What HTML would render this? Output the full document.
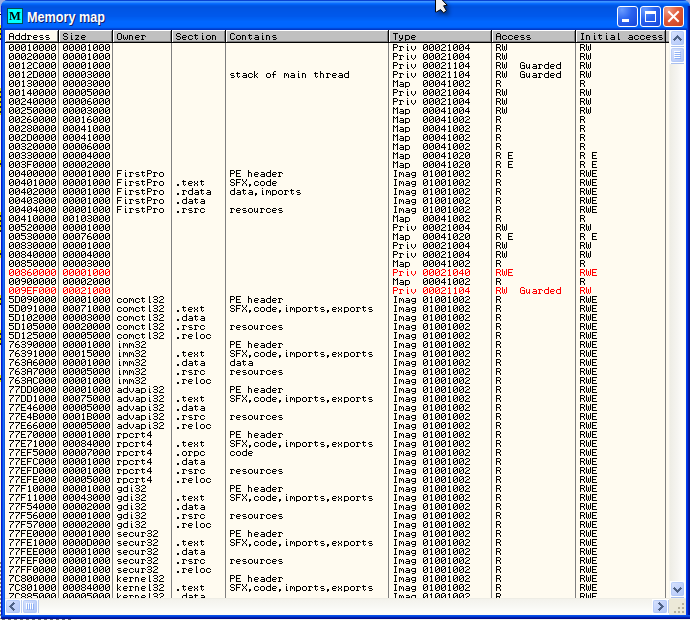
<!DOCTYPE html><html><head><meta charset="utf-8"><style>
html,body{margin:0;padding:0;}
body{width:690px;height:620px;position:relative;overflow:hidden;}
div,svg{position:absolute;box-sizing:content-box;}
.t{font:10px/9px "Liberation Mono",monospace;white-space:pre;height:9px;}
</style></head><body><div style="left:0px;top:0px;width:690px;height:620px;background:#9cade2;"></div><div style="left:0px;top:12px;width:1px;height:608px;background:#faf7ec;"></div><div style="left:0px;top:14px;width:1px;height:1px;background:#000;"></div><div style="left:0px;top:25px;width:1px;height:15px;background:repeating-linear-gradient(#f0ec00 0 3px,#222 3px 5px);"></div><div style="left:0px;top:88px;width:1px;height:27px;background:repeating-linear-gradient(#f0ec00 0 3px,#222 3px 5px);"></div><div style="left:0px;top:160px;width:1px;height:7px;background:repeating-linear-gradient(#f0ec00 0 3px,#222 3px 5px);"></div><div style="left:0px;top:212px;width:1px;height:20px;background:repeating-linear-gradient(#f0ec00 0 3px,#222 3px 5px);"></div><div style="left:0px;top:250px;width:1px;height:8px;background:repeating-linear-gradient(#f0ec00 0 3px,#222 3px 5px);"></div><div style="left:0px;top:295px;width:1px;height:10px;background:repeating-linear-gradient(#f0ec00 0 3px,#222 3px 5px);"></div><div style="left:0px;top:330px;width:1px;height:15px;background:repeating-linear-gradient(#f0ec00 0 3px,#222 3px 5px);"></div><div style="left:0px;top:375px;width:1px;height:7px;background:repeating-linear-gradient(#f0ec00 0 3px,#222 3px 5px);"></div><div style="left:0px;top:560px;width:1px;height:59px;background:repeating-linear-gradient(#faf7ec 0 2px,#8a8670 2px 4px);"></div><div style="left:0px;top:619px;width:690px;height:1px;background:#f6f4ee;"></div><div style="left:2px;top:619px;width:70px;height:1px;background:repeating-linear-gradient(90deg,#6a6a6a 0 3px,#f6f4ee 3px 6px);"></div><div style="left:1px;top:0px;width:689px;height:619px;background:#0855dd;border-radius:7px 7px 0 0;"></div><div style="left:1px;top:0px;width:689px;height:30px;background:linear-gradient(#0842d4 0px 1px,#3d95ff 1px 2px,#2a85ff 2px 3px,#0a6cff 3px 4px,#0062f5 4px 5px,#0058e8 5px 6px,#0054e2 6px 7px,#0053e0 7px 8px,#0054e3 8px 9px,#0055e5 9px 10px,#0056e6 10px 11px,#0056e7 11px 12px,#0057e8 12px 13px,#0057e9 13px 14px,#0058ea 14px 15px,#0058eb 15px 16px,#0059ec 16px 17px,#005df0 17px 18px,#005ff2 18px 19px,#0061f5 19px 20px,#0064fa 20px 21px,#0066ff 21px 22px,#0066ff 22px 23px,#0066ff 23px 24px,#0066ff 24px 25px,#0066ff 25px 26px,#0065fd 26px 27px,#0060f8 27px 28px,#0048d8 28px 29px,#0038c8 29px 30px);border-radius:7px 7px 0 0;"></div><div style="left:1px;top:30px;width:4px;height:589px;background:linear-gradient(90deg,#0019cf 0 1px,#0842e6 1px 2px,#1b6ff5 2px 3px,#0b55e2 3px 4px);"></div><div style="left:1px;top:6px;width:2px;height:24px;background:linear-gradient(90deg,#0028d8 0 1px,#0848ea 1px 2px);"></div><div style="left:686px;top:30px;width:4px;height:589px;background:linear-gradient(90deg,#0040ee 0 1px,#0030e0 1px 2px,#0018a8 2px 3px,#00138a 3px 4px);"></div><div style="left:687px;top:6px;width:3px;height:24px;background:linear-gradient(90deg,#0040e0 0 1px,#0020b0 1px 2px,#001590 2px 3px);"></div><div style="left:1px;top:615px;width:689px;height:4px;background:linear-gradient(#0a50e8 0 1px,#0040d8 1px 2px,#0020b0 2px 3px,#000e90 3px 4px);"></div><div style="left:7px;top:8px;width:14px;height:14px;background:#00ffff;border:1px solid #005050;"></div><div style="left:7px;top:7px;width:16px;height:16px;font:bold 12.5px/19px 'Liberation Serif',serif;color:#000;text-align:center;will-change:transform;">M</div><div style="left:27px;top:8px;height:18px;font:bold 13.6px/18px 'Liberation Sans',sans-serif;color:#fff;text-shadow:1px 1px 0 #0a1a6a;white-space:nowrap;transform:scale(0.93,1.1);transform-origin:0 0;">Memory map</div><div style="left:617px;top:6px;width:19px;height:19px;border:1px solid #fff;border-radius:3px;background:radial-gradient(circle at 20% 15%,#6a9cff 0,#2b64f0 45%,#1544d8 100%);"><div style="left:4px;top:12px;width:7px;height:3px;background:#fff"></div></div><div style="left:640px;top:6px;width:19px;height:19px;border:1px solid #fff;border-radius:3px;background:radial-gradient(circle at 20% 15%,#6a9cff 0,#2b64f0 45%,#1544d8 100%);"><div style="left:4px;top:4px;width:9px;height:7px;border:1px solid #fff;border-top-width:3px;"></div></div><div style="left:663px;top:6px;width:19px;height:19px;border:1px solid #fff;border-radius:3px;background:radial-gradient(circle at 20% 15%,#f0a08a 0,#e05a38 45%,#c8401f 100%);"><svg style="position:absolute;left:0;top:0" width="19" height="19"><path d="M5 5 L14 14 M14 5 L5 14" stroke="#fff" stroke-width="2" stroke-linecap="square"/></svg></div><div style="left:5px;top:30px;width:664px;height:568px;background:#fffbf0;"></div><div style="left:5px;top:30px;width:54px;height:13px;background:#fffbf0;"></div><div style="left:5px;top:30px;width:53px;height:1px;background:#fff;"></div><div style="left:5px;top:30px;width:1px;height:12px;background:#fff;"></div><div style="left:57px;top:31px;width:1px;height:11px;background:#808080;"></div><div style="left:6px;top:41px;width:52px;height:1px;background:#808080;"></div><div style="left:58px;top:30px;width:1px;height:13px;background:#000;"></div><div style="left:5px;top:42px;width:54px;height:1px;background:#000;"></div><div style="left:59px;top:30px;width:54px;height:13px;background:#c0c0c0;"></div><div style="left:59px;top:30px;width:53px;height:1px;background:#fff;"></div><div style="left:59px;top:30px;width:1px;height:12px;background:#fff;"></div><div style="left:111px;top:31px;width:1px;height:11px;background:#808080;"></div><div style="left:60px;top:41px;width:52px;height:1px;background:#808080;"></div><div style="left:112px;top:30px;width:1px;height:13px;background:#000;"></div><div style="left:59px;top:42px;width:54px;height:1px;background:#000;"></div><div style="left:113px;top:30px;width:59px;height:13px;background:#c0c0c0;"></div><div style="left:113px;top:30px;width:58px;height:1px;background:#fff;"></div><div style="left:113px;top:30px;width:1px;height:12px;background:#fff;"></div><div style="left:170px;top:31px;width:1px;height:11px;background:#808080;"></div><div style="left:114px;top:41px;width:57px;height:1px;background:#808080;"></div><div style="left:171px;top:30px;width:1px;height:13px;background:#000;"></div><div style="left:113px;top:42px;width:59px;height:1px;background:#000;"></div><div style="left:172px;top:30px;width:54px;height:13px;background:#c0c0c0;"></div><div style="left:172px;top:30px;width:53px;height:1px;background:#fff;"></div><div style="left:172px;top:30px;width:1px;height:12px;background:#fff;"></div><div style="left:224px;top:31px;width:1px;height:11px;background:#808080;"></div><div style="left:173px;top:41px;width:52px;height:1px;background:#808080;"></div><div style="left:225px;top:30px;width:1px;height:13px;background:#000;"></div><div style="left:172px;top:42px;width:54px;height:1px;background:#000;"></div><div style="left:226px;top:30px;width:163px;height:13px;background:#c0c0c0;"></div><div style="left:226px;top:30px;width:162px;height:1px;background:#fff;"></div><div style="left:226px;top:30px;width:1px;height:12px;background:#fff;"></div><div style="left:387px;top:31px;width:1px;height:11px;background:#808080;"></div><div style="left:227px;top:41px;width:161px;height:1px;background:#808080;"></div><div style="left:388px;top:30px;width:1px;height:13px;background:#000;"></div><div style="left:226px;top:42px;width:163px;height:1px;background:#000;"></div><div style="left:389px;top:30px;width:103px;height:13px;background:#c0c0c0;"></div><div style="left:389px;top:30px;width:102px;height:1px;background:#fff;"></div><div style="left:389px;top:30px;width:1px;height:12px;background:#fff;"></div><div style="left:490px;top:31px;width:1px;height:11px;background:#808080;"></div><div style="left:390px;top:41px;width:101px;height:1px;background:#808080;"></div><div style="left:491px;top:30px;width:1px;height:13px;background:#000;"></div><div style="left:389px;top:42px;width:103px;height:1px;background:#000;"></div><div style="left:492px;top:30px;width:84px;height:13px;background:#c0c0c0;"></div><div style="left:492px;top:30px;width:83px;height:1px;background:#fff;"></div><div style="left:492px;top:30px;width:1px;height:12px;background:#fff;"></div><div style="left:574px;top:31px;width:1px;height:11px;background:#808080;"></div><div style="left:493px;top:41px;width:82px;height:1px;background:#808080;"></div><div style="left:575px;top:30px;width:1px;height:13px;background:#000;"></div><div style="left:492px;top:42px;width:84px;height:1px;background:#000;"></div><div style="left:576px;top:30px;width:90px;height:13px;background:#c0c0c0;"></div><div style="left:576px;top:30px;width:89px;height:1px;background:#fff;"></div><div style="left:576px;top:30px;width:1px;height:12px;background:#fff;"></div><div style="left:664px;top:31px;width:1px;height:11px;background:#808080;"></div><div style="left:577px;top:41px;width:88px;height:1px;background:#808080;"></div><div style="left:665px;top:30px;width:1px;height:13px;background:#000;"></div><div style="left:576px;top:42px;width:90px;height:1px;background:#000;"></div><div style="left:666px;top:30px;width:3px;height:13px;background:#c0c0c0;"></div><div style="left:666px;top:30px;width:3px;height:1px;background:#fff;"></div><div style="left:666px;top:42px;width:3px;height:1px;background:#000;"></div><div style="left:666px;top:41px;width:3px;height:1px;background:#808080;"></div><div style="left:58px;top:43px;width:1px;height:555px;background:#808080;"></div><div style="left:112px;top:43px;width:1px;height:555px;background:#808080;"></div><div style="left:171px;top:43px;width:1px;height:555px;background:#808080;"></div><div style="left:225px;top:43px;width:1px;height:555px;background:#808080;"></div><div style="left:388px;top:43px;width:1px;height:555px;background:#808080;"></div><div style="left:491px;top:43px;width:1px;height:555px;background:#808080;"></div><div style="left:575px;top:43px;width:1px;height:555px;background:#808080;"></div><div style="left:665px;top:43px;width:1px;height:555px;background:#808080;"></div><svg style="left:0;top:0" width="690" height="620" shape-rendering="crispEdges"><defs><path id="g48" d="M1 0h3v1h-3zM0 1h1v1h-1zM4 1h1v1h-1zM0 2h1v1h-1zM3 2h2v1h-2zM0 3h1v1h-1zM2 3h1v1h-1zM4 3h1v1h-1zM0 4h2v1h-2zM4 4h1v1h-1zM0 5h1v1h-1zM4 5h1v1h-1zM1 6h3v1h-3z"/><path id="g49" d="M2 0h1v1h-1zM1 1h2v1h-2zM2 2h1v1h-1zM2 3h1v1h-1zM2 4h1v1h-1zM2 5h1v1h-1zM1 6h3v1h-3z"/><path id="g50" d="M1 0h3v1h-3zM0 1h1v1h-1zM4 1h1v1h-1zM4 2h1v1h-1zM2 3h2v1h-2zM1 4h1v1h-1zM0 5h1v1h-1zM0 6h5v1h-5z"/><path id="g51" d="M1 0h3v1h-3zM0 1h1v1h-1zM4 1h1v1h-1zM4 2h1v1h-1zM1 3h3v1h-3zM4 4h1v1h-1zM0 5h1v1h-1zM4 5h1v1h-1zM1 6h3v1h-3z"/><path id="g52" d="M3 0h1v1h-1zM2 1h2v1h-2zM1 2h1v1h-1zM3 2h1v1h-1zM0 3h1v1h-1zM3 3h1v1h-1zM0 4h5v1h-5zM3 5h1v1h-1zM3 6h1v1h-1z"/><path id="g53" d="M0 0h5v1h-5zM0 1h1v1h-1zM0 2h4v1h-4zM4 3h1v1h-1zM4 4h1v1h-1zM0 5h1v1h-1zM4 5h1v1h-1zM1 6h3v1h-3z"/><path id="g54" d="M2 0h2v1h-2zM1 1h1v1h-1zM0 2h1v1h-1zM0 3h4v1h-4zM0 4h1v1h-1zM4 4h1v1h-1zM0 5h1v1h-1zM4 5h1v1h-1zM1 6h3v1h-3z"/><path id="g55" d="M0 0h5v1h-5zM4 1h1v1h-1zM3 2h1v1h-1zM2 3h1v1h-1zM1 4h1v1h-1zM1 5h1v1h-1zM1 6h1v1h-1z"/><path id="g56" d="M1 0h3v1h-3zM0 1h1v1h-1zM4 1h1v1h-1zM0 2h1v1h-1zM4 2h1v1h-1zM1 3h3v1h-3zM0 4h1v1h-1zM4 4h1v1h-1zM0 5h1v1h-1zM4 5h1v1h-1zM1 6h3v1h-3z"/><path id="g57" d="M1 0h3v1h-3zM0 1h1v1h-1zM4 1h1v1h-1zM0 2h1v1h-1zM4 2h1v1h-1zM1 3h4v1h-4zM4 4h1v1h-1zM3 5h1v1h-1zM1 6h2v1h-2z"/><path id="g65" d="M1 0h3v1h-3zM0 1h1v1h-1zM4 1h1v1h-1zM0 2h1v1h-1zM4 2h1v1h-1zM0 3h5v1h-5zM0 4h1v1h-1zM4 4h1v1h-1zM0 5h1v1h-1zM4 5h1v1h-1zM0 6h1v1h-1zM4 6h1v1h-1z"/><path id="g66" d="M0 0h4v1h-4zM0 1h1v1h-1zM4 1h1v1h-1zM0 2h1v1h-1zM4 2h1v1h-1zM0 3h4v1h-4zM0 4h1v1h-1zM4 4h1v1h-1zM0 5h1v1h-1zM4 5h1v1h-1zM0 6h4v1h-4z"/><path id="g67" d="M1 0h3v1h-3zM0 1h1v1h-1zM4 1h1v1h-1zM0 2h1v1h-1zM0 3h1v1h-1zM0 4h1v1h-1zM0 5h1v1h-1zM4 5h1v1h-1zM1 6h3v1h-3z"/><path id="g68" d="M0 0h4v1h-4zM0 1h1v1h-1zM4 1h1v1h-1zM0 2h1v1h-1zM4 2h1v1h-1zM0 3h1v1h-1zM4 3h1v1h-1zM0 4h1v1h-1zM4 4h1v1h-1zM0 5h1v1h-1zM4 5h1v1h-1zM0 6h4v1h-4z"/><path id="g69" d="M0 0h5v1h-5zM0 1h1v1h-1zM0 2h1v1h-1zM0 3h4v1h-4zM0 4h1v1h-1zM0 5h1v1h-1zM0 6h5v1h-5z"/><path id="g70" d="M0 0h5v1h-5zM0 1h1v1h-1zM0 2h1v1h-1zM0 3h4v1h-4zM0 4h1v1h-1zM0 5h1v1h-1zM0 6h1v1h-1z"/><path id="g71" d="M1 0h3v1h-3zM0 1h1v1h-1zM4 1h1v1h-1zM0 2h1v1h-1zM0 3h1v1h-1zM2 3h3v1h-3zM0 4h1v1h-1zM4 4h1v1h-1zM0 5h1v1h-1zM4 5h1v1h-1zM1 6h4v1h-4z"/><path id="g73" d="M1 0h3v1h-3zM2 1h1v1h-1zM2 2h1v1h-1zM2 3h1v1h-1zM2 4h1v1h-1zM2 5h1v1h-1zM1 6h3v1h-3z"/><path id="g77" d="M0 0h1v1h-1zM4 0h1v1h-1zM0 1h2v1h-2zM3 1h2v1h-2zM0 2h1v1h-1zM2 2h1v1h-1zM4 2h1v1h-1zM0 3h1v1h-1zM4 3h1v1h-1zM0 4h1v1h-1zM4 4h1v1h-1zM0 5h1v1h-1zM4 5h1v1h-1zM0 6h1v1h-1zM4 6h1v1h-1z"/><path id="g79" d="M1 0h3v1h-3zM0 1h1v1h-1zM4 1h1v1h-1zM0 2h1v1h-1zM4 2h1v1h-1zM0 3h1v1h-1zM4 3h1v1h-1zM0 4h1v1h-1zM4 4h1v1h-1zM0 5h1v1h-1zM4 5h1v1h-1zM1 6h3v1h-3z"/><path id="g80" d="M0 0h4v1h-4zM0 1h1v1h-1zM4 1h1v1h-1zM0 2h1v1h-1zM4 2h1v1h-1zM0 3h4v1h-4zM0 4h1v1h-1zM0 5h1v1h-1zM0 6h1v1h-1z"/><path id="g82" d="M0 0h4v1h-4zM0 1h1v1h-1zM4 1h1v1h-1zM0 2h1v1h-1zM4 2h1v1h-1zM0 3h4v1h-4zM0 4h1v1h-1zM3 4h1v1h-1zM0 5h1v1h-1zM4 5h1v1h-1zM0 6h1v1h-1zM4 6h1v1h-1z"/><path id="g83" d="M1 0h3v1h-3zM0 1h1v1h-1zM4 1h1v1h-1zM0 2h1v1h-1zM1 3h3v1h-3zM4 4h1v1h-1zM0 5h1v1h-1zM4 5h1v1h-1zM1 6h3v1h-3z"/><path id="g84" d="M0 0h5v1h-5zM2 1h1v1h-1zM2 2h1v1h-1zM2 3h1v1h-1zM2 4h1v1h-1zM2 5h1v1h-1zM2 6h1v1h-1z"/><path id="g87" d="M0 0h1v1h-1zM4 0h1v1h-1zM0 1h1v1h-1zM4 1h1v1h-1zM0 2h1v1h-1zM2 2h1v1h-1zM4 2h1v1h-1zM0 3h1v1h-1zM2 3h1v1h-1zM4 3h1v1h-1zM0 4h1v1h-1zM2 4h1v1h-1zM4 4h1v1h-1zM0 5h1v1h-1zM2 5h1v1h-1zM4 5h1v1h-1zM1 6h1v1h-1zM3 6h1v1h-1z"/><path id="g88" d="M0 0h1v1h-1zM4 0h1v1h-1zM0 1h1v1h-1zM4 1h1v1h-1zM1 2h1v1h-1zM3 2h1v1h-1zM2 3h1v1h-1zM1 4h1v1h-1zM3 4h1v1h-1zM0 5h1v1h-1zM4 5h1v1h-1zM0 6h1v1h-1zM4 6h1v1h-1z"/><path id="g97" d="M1 2h3v1h-3zM4 3h1v1h-1zM1 4h4v1h-4zM0 5h1v1h-1zM4 5h1v1h-1zM1 6h4v1h-4z"/><path id="g99" d="M1 2h3v1h-3zM0 3h1v1h-1zM4 3h1v1h-1zM0 4h1v1h-1zM0 5h1v1h-1zM4 5h1v1h-1zM1 6h3v1h-3z"/><path id="g100" d="M4 0h1v1h-1zM4 1h1v1h-1zM1 2h4v1h-4zM0 3h1v1h-1zM4 3h1v1h-1zM0 4h1v1h-1zM4 4h1v1h-1zM0 5h1v1h-1zM4 5h1v1h-1zM1 6h4v1h-4z"/><path id="g101" d="M1 2h3v1h-3zM0 3h1v1h-1zM4 3h1v1h-1zM0 4h4v1h-4zM0 5h1v1h-1zM1 6h3v1h-3z"/><path id="g102" d="M2 0h2v1h-2zM1 1h1v1h-1zM1 2h1v1h-1zM0 3h4v1h-4zM1 4h1v1h-1zM1 5h1v1h-1zM1 6h1v1h-1z"/><path id="g103" d="M1 2h4v1h-4zM0 3h1v1h-1zM4 3h1v1h-1zM0 4h1v1h-1zM4 4h1v1h-1zM1 5h4v1h-4zM4 6h1v1h-1zM1 7h3v1h-3z"/><path id="g104" d="M0 0h1v1h-1zM0 1h1v1h-1zM0 2h3v1h-3zM0 3h1v1h-1zM3 3h1v1h-1zM0 4h1v1h-1zM3 4h1v1h-1zM0 5h1v1h-1zM3 5h1v1h-1zM0 6h1v1h-1zM3 6h1v1h-1z"/><path id="g105" d="M2 0h1v1h-1zM2 2h1v1h-1zM2 3h1v1h-1zM2 4h1v1h-1zM2 5h1v1h-1zM2 6h2v1h-2z"/><path id="g107" d="M0 0h1v1h-1zM0 1h1v1h-1zM0 2h1v1h-1zM3 2h1v1h-1zM0 3h1v1h-1zM2 3h1v1h-1zM0 4h2v1h-2zM0 5h1v1h-1zM2 5h1v1h-1zM0 6h1v1h-1zM3 6h1v1h-1z"/><path id="g108" d="M2 0h1v1h-1zM2 1h1v1h-1zM2 2h1v1h-1zM2 3h1v1h-1zM2 4h1v1h-1zM2 5h1v1h-1zM2 6h2v1h-2z"/><path id="g109" d="M0 2h2v1h-2zM3 2h1v1h-1zM0 3h1v1h-1zM2 3h1v1h-1zM4 3h1v1h-1zM0 4h1v1h-1zM2 4h1v1h-1zM4 4h1v1h-1zM0 5h1v1h-1zM4 5h1v1h-1zM0 6h1v1h-1zM4 6h1v1h-1z"/><path id="g110" d="M0 2h3v1h-3zM0 3h1v1h-1zM3 3h1v1h-1zM0 4h1v1h-1zM3 4h1v1h-1zM0 5h1v1h-1zM3 5h1v1h-1zM0 6h1v1h-1zM3 6h1v1h-1z"/><path id="g111" d="M1 2h3v1h-3zM0 3h1v1h-1zM4 3h1v1h-1zM0 4h1v1h-1zM4 4h1v1h-1zM0 5h1v1h-1zM4 5h1v1h-1zM1 6h3v1h-3z"/><path id="g112" d="M0 2h4v1h-4zM0 3h1v1h-1zM4 3h1v1h-1zM0 4h1v1h-1zM4 4h1v1h-1zM0 5h1v1h-1zM4 5h1v1h-1zM0 6h4v1h-4zM0 7h1v1h-1z"/><path id="g114" d="M0 2h4v1h-4zM1 3h1v1h-1zM4 3h1v1h-1zM1 4h1v1h-1zM1 5h1v1h-1zM0 6h3v1h-3z"/><path id="g115" d="M1 2h3v1h-3zM0 3h1v1h-1zM1 4h3v1h-3zM4 5h1v1h-1zM1 6h3v1h-3z"/><path id="g116" d="M1 1h1v1h-1zM0 2h4v1h-4zM1 3h1v1h-1zM1 4h1v1h-1zM1 5h1v1h-1zM3 5h1v1h-1zM2 6h1v1h-1z"/><path id="g117" d="M0 2h1v1h-1zM3 2h1v1h-1zM0 3h1v1h-1zM3 3h1v1h-1zM0 4h1v1h-1zM3 4h1v1h-1zM0 5h1v1h-1zM2 5h2v1h-2zM1 6h1v1h-1zM3 6h1v1h-1z"/><path id="g118" d="M0 2h1v1h-1zM4 2h1v1h-1zM0 3h1v1h-1zM4 3h1v1h-1zM0 4h1v1h-1zM4 4h1v1h-1zM1 5h1v1h-1zM3 5h1v1h-1zM2 6h1v1h-1z"/><path id="g119" d="M0 2h1v1h-1zM4 2h1v1h-1zM0 3h1v1h-1zM4 3h1v1h-1zM0 4h1v1h-1zM2 4h1v1h-1zM4 4h1v1h-1zM0 5h1v1h-1zM2 5h1v1h-1zM4 5h1v1h-1zM1 6h1v1h-1zM3 6h1v1h-1z"/><path id="g120" d="M0 2h1v1h-1zM3 2h1v1h-1zM0 3h1v1h-1zM3 3h1v1h-1zM1 4h2v1h-2zM0 5h1v1h-1zM3 5h1v1h-1zM0 6h1v1h-1zM3 6h1v1h-1z"/><path id="g121" d="M0 2h1v1h-1zM3 2h1v1h-1zM0 3h1v1h-1zM3 3h1v1h-1zM0 4h1v1h-1zM3 4h1v1h-1zM1 5h3v1h-3zM2 6h1v1h-1zM0 7h2v1h-2z"/><path id="g122" d="M0 2h4v1h-4zM3 3h1v1h-1zM2 4h1v1h-1zM1 5h1v1h-1zM0 6h4v1h-4z"/><path id="g44" d="M1 5h2v1h-2zM1 6h2v1h-2zM1 7h1v1h-1z"/><path id="g46" d="M1 5h2v1h-2zM1 6h2v1h-2z"/><clipPath id="cb"><rect x="5" y="43" width="660" height="555"/></clipPath><clipPath id="ch"><rect x="5" y="30" width="660" height="12"/></clipPath></defs><g clip-path="url(#ch)" fill="#000"><use href="#g65" x="9" y="33"/><use href="#g100" x="15" y="33"/><use href="#g100" x="21" y="33"/><use href="#g114" x="27" y="33"/><use href="#g101" x="33" y="33"/><use href="#g115" x="39" y="33"/><use href="#g115" x="45" y="33"/><use href="#g83" x="63" y="33"/><use href="#g105" x="69" y="33"/><use href="#g122" x="75" y="33"/><use href="#g101" x="81" y="33"/><use href="#g79" x="117" y="33"/><use href="#g119" x="123" y="33"/><use href="#g110" x="129" y="33"/><use href="#g101" x="135" y="33"/><use href="#g114" x="141" y="33"/><use href="#g83" x="176" y="33"/><use href="#g101" x="182" y="33"/><use href="#g99" x="188" y="33"/><use href="#g116" x="194" y="33"/><use href="#g105" x="200" y="33"/><use href="#g111" x="206" y="33"/><use href="#g110" x="212" y="33"/><use href="#g67" x="230" y="33"/><use href="#g111" x="236" y="33"/><use href="#g110" x="242" y="33"/><use href="#g116" x="248" y="33"/><use href="#g97" x="254" y="33"/><use href="#g105" x="260" y="33"/><use href="#g110" x="266" y="33"/><use href="#g115" x="272" y="33"/><use href="#g84" x="393" y="33"/><use href="#g121" x="399" y="33"/><use href="#g112" x="405" y="33"/><use href="#g101" x="411" y="33"/><use href="#g65" x="496" y="33"/><use href="#g99" x="502" y="33"/><use href="#g99" x="508" y="33"/><use href="#g101" x="514" y="33"/><use href="#g115" x="520" y="33"/><use href="#g115" x="526" y="33"/><use href="#g73" x="580" y="33"/><use href="#g110" x="586" y="33"/><use href="#g105" x="592" y="33"/><use href="#g116" x="598" y="33"/><use href="#g105" x="604" y="33"/><use href="#g97" x="610" y="33"/><use href="#g108" x="616" y="33"/><use href="#g97" x="628" y="33"/><use href="#g99" x="634" y="33"/><use href="#g99" x="640" y="33"/><use href="#g101" x="646" y="33"/><use href="#g115" x="652" y="33"/><use href="#g115" x="658" y="33"/></g><g clip-path="url(#cb)" fill="#000"><use href="#g48" x="9" y="44"/><use href="#g48" x="15" y="44"/><use href="#g48" x="21" y="44"/><use href="#g49" x="27" y="44"/><use href="#g48" x="33" y="44"/><use href="#g48" x="39" y="44"/><use href="#g48" x="45" y="44"/><use href="#g48" x="51" y="44"/><use href="#g48" x="63" y="44"/><use href="#g48" x="69" y="44"/><use href="#g48" x="75" y="44"/><use href="#g48" x="81" y="44"/><use href="#g49" x="87" y="44"/><use href="#g48" x="93" y="44"/><use href="#g48" x="99" y="44"/><use href="#g48" x="105" y="44"/><use href="#g80" x="393" y="44"/><use href="#g114" x="399" y="44"/><use href="#g105" x="405" y="44"/><use href="#g118" x="411" y="44"/><use href="#g48" x="423" y="44"/><use href="#g48" x="429" y="44"/><use href="#g48" x="435" y="44"/><use href="#g50" x="441" y="44"/><use href="#g49" x="447" y="44"/><use href="#g48" x="453" y="44"/><use href="#g48" x="459" y="44"/><use href="#g52" x="465" y="44"/><use href="#g82" x="496" y="44"/><use href="#g87" x="502" y="44"/><use href="#g82" x="580" y="44"/><use href="#g87" x="586" y="44"/><use href="#g48" x="9" y="53"/><use href="#g48" x="15" y="53"/><use href="#g48" x="21" y="53"/><use href="#g50" x="27" y="53"/><use href="#g48" x="33" y="53"/><use href="#g48" x="39" y="53"/><use href="#g48" x="45" y="53"/><use href="#g48" x="51" y="53"/><use href="#g48" x="63" y="53"/><use href="#g48" x="69" y="53"/><use href="#g48" x="75" y="53"/><use href="#g48" x="81" y="53"/><use href="#g49" x="87" y="53"/><use href="#g48" x="93" y="53"/><use href="#g48" x="99" y="53"/><use href="#g48" x="105" y="53"/><use href="#g80" x="393" y="53"/><use href="#g114" x="399" y="53"/><use href="#g105" x="405" y="53"/><use href="#g118" x="411" y="53"/><use href="#g48" x="423" y="53"/><use href="#g48" x="429" y="53"/><use href="#g48" x="435" y="53"/><use href="#g50" x="441" y="53"/><use href="#g49" x="447" y="53"/><use href="#g48" x="453" y="53"/><use href="#g48" x="459" y="53"/><use href="#g52" x="465" y="53"/><use href="#g82" x="496" y="53"/><use href="#g87" x="502" y="53"/><use href="#g82" x="580" y="53"/><use href="#g87" x="586" y="53"/><use href="#g48" x="9" y="62"/><use href="#g48" x="15" y="62"/><use href="#g49" x="21" y="62"/><use href="#g50" x="27" y="62"/><use href="#g67" x="33" y="62"/><use href="#g48" x="39" y="62"/><use href="#g48" x="45" y="62"/><use href="#g48" x="51" y="62"/><use href="#g48" x="63" y="62"/><use href="#g48" x="69" y="62"/><use href="#g48" x="75" y="62"/><use href="#g48" x="81" y="62"/><use href="#g49" x="87" y="62"/><use href="#g48" x="93" y="62"/><use href="#g48" x="99" y="62"/><use href="#g48" x="105" y="62"/><use href="#g80" x="393" y="62"/><use href="#g114" x="399" y="62"/><use href="#g105" x="405" y="62"/><use href="#g118" x="411" y="62"/><use href="#g48" x="423" y="62"/><use href="#g48" x="429" y="62"/><use href="#g48" x="435" y="62"/><use href="#g50" x="441" y="62"/><use href="#g49" x="447" y="62"/><use href="#g49" x="453" y="62"/><use href="#g48" x="459" y="62"/><use href="#g52" x="465" y="62"/><use href="#g82" x="496" y="62"/><use href="#g87" x="502" y="62"/><use href="#g71" x="520" y="62"/><use href="#g117" x="526" y="62"/><use href="#g97" x="532" y="62"/><use href="#g114" x="538" y="62"/><use href="#g100" x="544" y="62"/><use href="#g101" x="550" y="62"/><use href="#g100" x="556" y="62"/><use href="#g82" x="580" y="62"/><use href="#g87" x="586" y="62"/><use href="#g48" x="9" y="71"/><use href="#g48" x="15" y="71"/><use href="#g49" x="21" y="71"/><use href="#g50" x="27" y="71"/><use href="#g68" x="33" y="71"/><use href="#g48" x="39" y="71"/><use href="#g48" x="45" y="71"/><use href="#g48" x="51" y="71"/><use href="#g48" x="63" y="71"/><use href="#g48" x="69" y="71"/><use href="#g48" x="75" y="71"/><use href="#g48" x="81" y="71"/><use href="#g51" x="87" y="71"/><use href="#g48" x="93" y="71"/><use href="#g48" x="99" y="71"/><use href="#g48" x="105" y="71"/><use href="#g115" x="230" y="71"/><use href="#g116" x="236" y="71"/><use href="#g97" x="242" y="71"/><use href="#g99" x="248" y="71"/><use href="#g107" x="254" y="71"/><use href="#g111" x="266" y="71"/><use href="#g102" x="272" y="71"/><use href="#g109" x="284" y="71"/><use href="#g97" x="290" y="71"/><use href="#g105" x="296" y="71"/><use href="#g110" x="302" y="71"/><use href="#g116" x="314" y="71"/><use href="#g104" x="320" y="71"/><use href="#g114" x="326" y="71"/><use href="#g101" x="332" y="71"/><use href="#g97" x="338" y="71"/><use href="#g100" x="344" y="71"/><use href="#g80" x="393" y="71"/><use href="#g114" x="399" y="71"/><use href="#g105" x="405" y="71"/><use href="#g118" x="411" y="71"/><use href="#g48" x="423" y="71"/><use href="#g48" x="429" y="71"/><use href="#g48" x="435" y="71"/><use href="#g50" x="441" y="71"/><use href="#g49" x="447" y="71"/><use href="#g49" x="453" y="71"/><use href="#g48" x="459" y="71"/><use href="#g52" x="465" y="71"/><use href="#g82" x="496" y="71"/><use href="#g87" x="502" y="71"/><use href="#g71" x="520" y="71"/><use href="#g117" x="526" y="71"/><use href="#g97" x="532" y="71"/><use href="#g114" x="538" y="71"/><use href="#g100" x="544" y="71"/><use href="#g101" x="550" y="71"/><use href="#g100" x="556" y="71"/><use href="#g82" x="580" y="71"/><use href="#g87" x="586" y="71"/><use href="#g48" x="9" y="80"/><use href="#g48" x="15" y="80"/><use href="#g49" x="21" y="80"/><use href="#g51" x="27" y="80"/><use href="#g48" x="33" y="80"/><use href="#g48" x="39" y="80"/><use href="#g48" x="45" y="80"/><use href="#g48" x="51" y="80"/><use href="#g48" x="63" y="80"/><use href="#g48" x="69" y="80"/><use href="#g48" x="75" y="80"/><use href="#g48" x="81" y="80"/><use href="#g51" x="87" y="80"/><use href="#g48" x="93" y="80"/><use href="#g48" x="99" y="80"/><use href="#g48" x="105" y="80"/><use href="#g77" x="393" y="80"/><use href="#g97" x="399" y="80"/><use href="#g112" x="405" y="80"/><use href="#g48" x="423" y="80"/><use href="#g48" x="429" y="80"/><use href="#g48" x="435" y="80"/><use href="#g52" x="441" y="80"/><use href="#g49" x="447" y="80"/><use href="#g48" x="453" y="80"/><use href="#g48" x="459" y="80"/><use href="#g50" x="465" y="80"/><use href="#g82" x="496" y="80"/><use href="#g82" x="580" y="80"/><use href="#g48" x="9" y="89"/><use href="#g48" x="15" y="89"/><use href="#g49" x="21" y="89"/><use href="#g52" x="27" y="89"/><use href="#g48" x="33" y="89"/><use href="#g48" x="39" y="89"/><use href="#g48" x="45" y="89"/><use href="#g48" x="51" y="89"/><use href="#g48" x="63" y="89"/><use href="#g48" x="69" y="89"/><use href="#g48" x="75" y="89"/><use href="#g48" x="81" y="89"/><use href="#g53" x="87" y="89"/><use href="#g48" x="93" y="89"/><use href="#g48" x="99" y="89"/><use href="#g48" x="105" y="89"/><use href="#g80" x="393" y="89"/><use href="#g114" x="399" y="89"/><use href="#g105" x="405" y="89"/><use href="#g118" x="411" y="89"/><use href="#g48" x="423" y="89"/><use href="#g48" x="429" y="89"/><use href="#g48" x="435" y="89"/><use href="#g50" x="441" y="89"/><use href="#g49" x="447" y="89"/><use href="#g48" x="453" y="89"/><use href="#g48" x="459" y="89"/><use href="#g52" x="465" y="89"/><use href="#g82" x="496" y="89"/><use href="#g87" x="502" y="89"/><use href="#g82" x="580" y="89"/><use href="#g87" x="586" y="89"/><use href="#g48" x="9" y="98"/><use href="#g48" x="15" y="98"/><use href="#g50" x="21" y="98"/><use href="#g52" x="27" y="98"/><use href="#g48" x="33" y="98"/><use href="#g48" x="39" y="98"/><use href="#g48" x="45" y="98"/><use href="#g48" x="51" y="98"/><use href="#g48" x="63" y="98"/><use href="#g48" x="69" y="98"/><use href="#g48" x="75" y="98"/><use href="#g48" x="81" y="98"/><use href="#g54" x="87" y="98"/><use href="#g48" x="93" y="98"/><use href="#g48" x="99" y="98"/><use href="#g48" x="105" y="98"/><use href="#g80" x="393" y="98"/><use href="#g114" x="399" y="98"/><use href="#g105" x="405" y="98"/><use href="#g118" x="411" y="98"/><use href="#g48" x="423" y="98"/><use href="#g48" x="429" y="98"/><use href="#g48" x="435" y="98"/><use href="#g50" x="441" y="98"/><use href="#g49" x="447" y="98"/><use href="#g48" x="453" y="98"/><use href="#g48" x="459" y="98"/><use href="#g52" x="465" y="98"/><use href="#g82" x="496" y="98"/><use href="#g87" x="502" y="98"/><use href="#g82" x="580" y="98"/><use href="#g87" x="586" y="98"/><use href="#g48" x="9" y="107"/><use href="#g48" x="15" y="107"/><use href="#g50" x="21" y="107"/><use href="#g53" x="27" y="107"/><use href="#g48" x="33" y="107"/><use href="#g48" x="39" y="107"/><use href="#g48" x="45" y="107"/><use href="#g48" x="51" y="107"/><use href="#g48" x="63" y="107"/><use href="#g48" x="69" y="107"/><use href="#g48" x="75" y="107"/><use href="#g48" x="81" y="107"/><use href="#g51" x="87" y="107"/><use href="#g48" x="93" y="107"/><use href="#g48" x="99" y="107"/><use href="#g48" x="105" y="107"/><use href="#g77" x="393" y="107"/><use href="#g97" x="399" y="107"/><use href="#g112" x="405" y="107"/><use href="#g48" x="423" y="107"/><use href="#g48" x="429" y="107"/><use href="#g48" x="435" y="107"/><use href="#g52" x="441" y="107"/><use href="#g49" x="447" y="107"/><use href="#g48" x="453" y="107"/><use href="#g48" x="459" y="107"/><use href="#g52" x="465" y="107"/><use href="#g82" x="496" y="107"/><use href="#g87" x="502" y="107"/><use href="#g82" x="580" y="107"/><use href="#g87" x="586" y="107"/><use href="#g48" x="9" y="116"/><use href="#g48" x="15" y="116"/><use href="#g50" x="21" y="116"/><use href="#g54" x="27" y="116"/><use href="#g48" x="33" y="116"/><use href="#g48" x="39" y="116"/><use href="#g48" x="45" y="116"/><use href="#g48" x="51" y="116"/><use href="#g48" x="63" y="116"/><use href="#g48" x="69" y="116"/><use href="#g48" x="75" y="116"/><use href="#g49" x="81" y="116"/><use href="#g54" x="87" y="116"/><use href="#g48" x="93" y="116"/><use href="#g48" x="99" y="116"/><use href="#g48" x="105" y="116"/><use href="#g77" x="393" y="116"/><use href="#g97" x="399" y="116"/><use href="#g112" x="405" y="116"/><use href="#g48" x="423" y="116"/><use href="#g48" x="429" y="116"/><use href="#g48" x="435" y="116"/><use href="#g52" x="441" y="116"/><use href="#g49" x="447" y="116"/><use href="#g48" x="453" y="116"/><use href="#g48" x="459" y="116"/><use href="#g50" x="465" y="116"/><use href="#g82" x="496" y="116"/><use href="#g82" x="580" y="116"/><use href="#g48" x="9" y="125"/><use href="#g48" x="15" y="125"/><use href="#g50" x="21" y="125"/><use href="#g56" x="27" y="125"/><use href="#g48" x="33" y="125"/><use href="#g48" x="39" y="125"/><use href="#g48" x="45" y="125"/><use href="#g48" x="51" y="125"/><use href="#g48" x="63" y="125"/><use href="#g48" x="69" y="125"/><use href="#g48" x="75" y="125"/><use href="#g52" x="81" y="125"/><use href="#g49" x="87" y="125"/><use href="#g48" x="93" y="125"/><use href="#g48" x="99" y="125"/><use href="#g48" x="105" y="125"/><use href="#g77" x="393" y="125"/><use href="#g97" x="399" y="125"/><use href="#g112" x="405" y="125"/><use href="#g48" x="423" y="125"/><use href="#g48" x="429" y="125"/><use href="#g48" x="435" y="125"/><use href="#g52" x="441" y="125"/><use href="#g49" x="447" y="125"/><use href="#g48" x="453" y="125"/><use href="#g48" x="459" y="125"/><use href="#g50" x="465" y="125"/><use href="#g82" x="496" y="125"/><use href="#g82" x="580" y="125"/><use href="#g48" x="9" y="134"/><use href="#g48" x="15" y="134"/><use href="#g50" x="21" y="134"/><use href="#g68" x="27" y="134"/><use href="#g48" x="33" y="134"/><use href="#g48" x="39" y="134"/><use href="#g48" x="45" y="134"/><use href="#g48" x="51" y="134"/><use href="#g48" x="63" y="134"/><use href="#g48" x="69" y="134"/><use href="#g48" x="75" y="134"/><use href="#g52" x="81" y="134"/><use href="#g49" x="87" y="134"/><use href="#g48" x="93" y="134"/><use href="#g48" x="99" y="134"/><use href="#g48" x="105" y="134"/><use href="#g77" x="393" y="134"/><use href="#g97" x="399" y="134"/><use href="#g112" x="405" y="134"/><use href="#g48" x="423" y="134"/><use href="#g48" x="429" y="134"/><use href="#g48" x="435" y="134"/><use href="#g52" x="441" y="134"/><use href="#g49" x="447" y="134"/><use href="#g48" x="453" y="134"/><use href="#g48" x="459" y="134"/><use href="#g50" x="465" y="134"/><use href="#g82" x="496" y="134"/><use href="#g82" x="580" y="134"/><use href="#g48" x="9" y="143"/><use href="#g48" x="15" y="143"/><use href="#g51" x="21" y="143"/><use href="#g50" x="27" y="143"/><use href="#g48" x="33" y="143"/><use href="#g48" x="39" y="143"/><use href="#g48" x="45" y="143"/><use href="#g48" x="51" y="143"/><use href="#g48" x="63" y="143"/><use href="#g48" x="69" y="143"/><use href="#g48" x="75" y="143"/><use href="#g48" x="81" y="143"/><use href="#g54" x="87" y="143"/><use href="#g48" x="93" y="143"/><use href="#g48" x="99" y="143"/><use href="#g48" x="105" y="143"/><use href="#g77" x="393" y="143"/><use href="#g97" x="399" y="143"/><use href="#g112" x="405" y="143"/><use href="#g48" x="423" y="143"/><use href="#g48" x="429" y="143"/><use href="#g48" x="435" y="143"/><use href="#g52" x="441" y="143"/><use href="#g49" x="447" y="143"/><use href="#g48" x="453" y="143"/><use href="#g48" x="459" y="143"/><use href="#g50" x="465" y="143"/><use href="#g82" x="496" y="143"/><use href="#g82" x="580" y="143"/><use href="#g48" x="9" y="152"/><use href="#g48" x="15" y="152"/><use href="#g51" x="21" y="152"/><use href="#g51" x="27" y="152"/><use href="#g48" x="33" y="152"/><use href="#g48" x="39" y="152"/><use href="#g48" x="45" y="152"/><use href="#g48" x="51" y="152"/><use href="#g48" x="63" y="152"/><use href="#g48" x="69" y="152"/><use href="#g48" x="75" y="152"/><use href="#g48" x="81" y="152"/><use href="#g52" x="87" y="152"/><use href="#g48" x="93" y="152"/><use href="#g48" x="99" y="152"/><use href="#g48" x="105" y="152"/><use href="#g77" x="393" y="152"/><use href="#g97" x="399" y="152"/><use href="#g112" x="405" y="152"/><use href="#g48" x="423" y="152"/><use href="#g48" x="429" y="152"/><use href="#g48" x="435" y="152"/><use href="#g52" x="441" y="152"/><use href="#g49" x="447" y="152"/><use href="#g48" x="453" y="152"/><use href="#g50" x="459" y="152"/><use href="#g48" x="465" y="152"/><use href="#g82" x="496" y="152"/><use href="#g69" x="508" y="152"/><use href="#g82" x="580" y="152"/><use href="#g69" x="592" y="152"/><use href="#g48" x="9" y="161"/><use href="#g48" x="15" y="161"/><use href="#g51" x="21" y="161"/><use href="#g70" x="27" y="161"/><use href="#g48" x="33" y="161"/><use href="#g48" x="39" y="161"/><use href="#g48" x="45" y="161"/><use href="#g48" x="51" y="161"/><use href="#g48" x="63" y="161"/><use href="#g48" x="69" y="161"/><use href="#g48" x="75" y="161"/><use href="#g48" x="81" y="161"/><use href="#g50" x="87" y="161"/><use href="#g48" x="93" y="161"/><use href="#g48" x="99" y="161"/><use href="#g48" x="105" y="161"/><use href="#g77" x="393" y="161"/><use href="#g97" x="399" y="161"/><use href="#g112" x="405" y="161"/><use href="#g48" x="423" y="161"/><use href="#g48" x="429" y="161"/><use href="#g48" x="435" y="161"/><use href="#g52" x="441" y="161"/><use href="#g49" x="447" y="161"/><use href="#g48" x="453" y="161"/><use href="#g50" x="459" y="161"/><use href="#g48" x="465" y="161"/><use href="#g82" x="496" y="161"/><use href="#g69" x="508" y="161"/><use href="#g82" x="580" y="161"/><use href="#g69" x="592" y="161"/><use href="#g48" x="9" y="170"/><use href="#g48" x="15" y="170"/><use href="#g52" x="21" y="170"/><use href="#g48" x="27" y="170"/><use href="#g48" x="33" y="170"/><use href="#g48" x="39" y="170"/><use href="#g48" x="45" y="170"/><use href="#g48" x="51" y="170"/><use href="#g48" x="63" y="170"/><use href="#g48" x="69" y="170"/><use href="#g48" x="75" y="170"/><use href="#g48" x="81" y="170"/><use href="#g49" x="87" y="170"/><use href="#g48" x="93" y="170"/><use href="#g48" x="99" y="170"/><use href="#g48" x="105" y="170"/><use href="#g70" x="117" y="170"/><use href="#g105" x="123" y="170"/><use href="#g114" x="129" y="170"/><use href="#g115" x="135" y="170"/><use href="#g116" x="141" y="170"/><use href="#g80" x="147" y="170"/><use href="#g114" x="153" y="170"/><use href="#g111" x="159" y="170"/><use href="#g80" x="230" y="170"/><use href="#g69" x="236" y="170"/><use href="#g104" x="248" y="170"/><use href="#g101" x="254" y="170"/><use href="#g97" x="260" y="170"/><use href="#g100" x="266" y="170"/><use href="#g101" x="272" y="170"/><use href="#g114" x="278" y="170"/><use href="#g73" x="393" y="170"/><use href="#g109" x="399" y="170"/><use href="#g97" x="405" y="170"/><use href="#g103" x="411" y="170"/><use href="#g48" x="423" y="170"/><use href="#g49" x="429" y="170"/><use href="#g48" x="435" y="170"/><use href="#g48" x="441" y="170"/><use href="#g49" x="447" y="170"/><use href="#g48" x="453" y="170"/><use href="#g48" x="459" y="170"/><use href="#g50" x="465" y="170"/><use href="#g82" x="496" y="170"/><use href="#g82" x="580" y="170"/><use href="#g87" x="586" y="170"/><use href="#g69" x="592" y="170"/><use href="#g48" x="9" y="179"/><use href="#g48" x="15" y="179"/><use href="#g52" x="21" y="179"/><use href="#g48" x="27" y="179"/><use href="#g49" x="33" y="179"/><use href="#g48" x="39" y="179"/><use href="#g48" x="45" y="179"/><use href="#g48" x="51" y="179"/><use href="#g48" x="63" y="179"/><use href="#g48" x="69" y="179"/><use href="#g48" x="75" y="179"/><use href="#g48" x="81" y="179"/><use href="#g49" x="87" y="179"/><use href="#g48" x="93" y="179"/><use href="#g48" x="99" y="179"/><use href="#g48" x="105" y="179"/><use href="#g70" x="117" y="179"/><use href="#g105" x="123" y="179"/><use href="#g114" x="129" y="179"/><use href="#g115" x="135" y="179"/><use href="#g116" x="141" y="179"/><use href="#g80" x="147" y="179"/><use href="#g114" x="153" y="179"/><use href="#g111" x="159" y="179"/><use href="#g46" x="176" y="179"/><use href="#g116" x="182" y="179"/><use href="#g101" x="188" y="179"/><use href="#g120" x="194" y="179"/><use href="#g116" x="200" y="179"/><use href="#g83" x="230" y="179"/><use href="#g70" x="236" y="179"/><use href="#g88" x="242" y="179"/><use href="#g44" x="248" y="179"/><use href="#g99" x="254" y="179"/><use href="#g111" x="260" y="179"/><use href="#g100" x="266" y="179"/><use href="#g101" x="272" y="179"/><use href="#g73" x="393" y="179"/><use href="#g109" x="399" y="179"/><use href="#g97" x="405" y="179"/><use href="#g103" x="411" y="179"/><use href="#g48" x="423" y="179"/><use href="#g49" x="429" y="179"/><use href="#g48" x="435" y="179"/><use href="#g48" x="441" y="179"/><use href="#g49" x="447" y="179"/><use href="#g48" x="453" y="179"/><use href="#g48" x="459" y="179"/><use href="#g50" x="465" y="179"/><use href="#g82" x="496" y="179"/><use href="#g82" x="580" y="179"/><use href="#g87" x="586" y="179"/><use href="#g69" x="592" y="179"/><use href="#g48" x="9" y="188"/><use href="#g48" x="15" y="188"/><use href="#g52" x="21" y="188"/><use href="#g48" x="27" y="188"/><use href="#g50" x="33" y="188"/><use href="#g48" x="39" y="188"/><use href="#g48" x="45" y="188"/><use href="#g48" x="51" y="188"/><use href="#g48" x="63" y="188"/><use href="#g48" x="69" y="188"/><use href="#g48" x="75" y="188"/><use href="#g48" x="81" y="188"/><use href="#g49" x="87" y="188"/><use href="#g48" x="93" y="188"/><use href="#g48" x="99" y="188"/><use href="#g48" x="105" y="188"/><use href="#g70" x="117" y="188"/><use href="#g105" x="123" y="188"/><use href="#g114" x="129" y="188"/><use href="#g115" x="135" y="188"/><use href="#g116" x="141" y="188"/><use href="#g80" x="147" y="188"/><use href="#g114" x="153" y="188"/><use href="#g111" x="159" y="188"/><use href="#g46" x="176" y="188"/><use href="#g114" x="182" y="188"/><use href="#g100" x="188" y="188"/><use href="#g97" x="194" y="188"/><use href="#g116" x="200" y="188"/><use href="#g97" x="206" y="188"/><use href="#g100" x="230" y="188"/><use href="#g97" x="236" y="188"/><use href="#g116" x="242" y="188"/><use href="#g97" x="248" y="188"/><use href="#g44" x="254" y="188"/><use href="#g105" x="260" y="188"/><use href="#g109" x="266" y="188"/><use href="#g112" x="272" y="188"/><use href="#g111" x="278" y="188"/><use href="#g114" x="284" y="188"/><use href="#g116" x="290" y="188"/><use href="#g115" x="296" y="188"/><use href="#g73" x="393" y="188"/><use href="#g109" x="399" y="188"/><use href="#g97" x="405" y="188"/><use href="#g103" x="411" y="188"/><use href="#g48" x="423" y="188"/><use href="#g49" x="429" y="188"/><use href="#g48" x="435" y="188"/><use href="#g48" x="441" y="188"/><use href="#g49" x="447" y="188"/><use href="#g48" x="453" y="188"/><use href="#g48" x="459" y="188"/><use href="#g50" x="465" y="188"/><use href="#g82" x="496" y="188"/><use href="#g82" x="580" y="188"/><use href="#g87" x="586" y="188"/><use href="#g69" x="592" y="188"/><use href="#g48" x="9" y="197"/><use href="#g48" x="15" y="197"/><use href="#g52" x="21" y="197"/><use href="#g48" x="27" y="197"/><use href="#g51" x="33" y="197"/><use href="#g48" x="39" y="197"/><use href="#g48" x="45" y="197"/><use href="#g48" x="51" y="197"/><use href="#g48" x="63" y="197"/><use href="#g48" x="69" y="197"/><use href="#g48" x="75" y="197"/><use href="#g48" x="81" y="197"/><use href="#g49" x="87" y="197"/><use href="#g48" x="93" y="197"/><use href="#g48" x="99" y="197"/><use href="#g48" x="105" y="197"/><use href="#g70" x="117" y="197"/><use href="#g105" x="123" y="197"/><use href="#g114" x="129" y="197"/><use href="#g115" x="135" y="197"/><use href="#g116" x="141" y="197"/><use href="#g80" x="147" y="197"/><use href="#g114" x="153" y="197"/><use href="#g111" x="159" y="197"/><use href="#g46" x="176" y="197"/><use href="#g100" x="182" y="197"/><use href="#g97" x="188" y="197"/><use href="#g116" x="194" y="197"/><use href="#g97" x="200" y="197"/><use href="#g73" x="393" y="197"/><use href="#g109" x="399" y="197"/><use href="#g97" x="405" y="197"/><use href="#g103" x="411" y="197"/><use href="#g48" x="423" y="197"/><use href="#g49" x="429" y="197"/><use href="#g48" x="435" y="197"/><use href="#g48" x="441" y="197"/><use href="#g49" x="447" y="197"/><use href="#g48" x="453" y="197"/><use href="#g48" x="459" y="197"/><use href="#g50" x="465" y="197"/><use href="#g82" x="496" y="197"/><use href="#g82" x="580" y="197"/><use href="#g87" x="586" y="197"/><use href="#g69" x="592" y="197"/><use href="#g48" x="9" y="206"/><use href="#g48" x="15" y="206"/><use href="#g52" x="21" y="206"/><use href="#g48" x="27" y="206"/><use href="#g52" x="33" y="206"/><use href="#g48" x="39" y="206"/><use href="#g48" x="45" y="206"/><use href="#g48" x="51" y="206"/><use href="#g48" x="63" y="206"/><use href="#g48" x="69" y="206"/><use href="#g48" x="75" y="206"/><use href="#g48" x="81" y="206"/><use href="#g49" x="87" y="206"/><use href="#g48" x="93" y="206"/><use href="#g48" x="99" y="206"/><use href="#g48" x="105" y="206"/><use href="#g70" x="117" y="206"/><use href="#g105" x="123" y="206"/><use href="#g114" x="129" y="206"/><use href="#g115" x="135" y="206"/><use href="#g116" x="141" y="206"/><use href="#g80" x="147" y="206"/><use href="#g114" x="153" y="206"/><use href="#g111" x="159" y="206"/><use href="#g46" x="176" y="206"/><use href="#g114" x="182" y="206"/><use href="#g115" x="188" y="206"/><use href="#g114" x="194" y="206"/><use href="#g99" x="200" y="206"/><use href="#g114" x="230" y="206"/><use href="#g101" x="236" y="206"/><use href="#g115" x="242" y="206"/><use href="#g111" x="248" y="206"/><use href="#g117" x="254" y="206"/><use href="#g114" x="260" y="206"/><use href="#g99" x="266" y="206"/><use href="#g101" x="272" y="206"/><use href="#g115" x="278" y="206"/><use href="#g73" x="393" y="206"/><use href="#g109" x="399" y="206"/><use href="#g97" x="405" y="206"/><use href="#g103" x="411" y="206"/><use href="#g48" x="423" y="206"/><use href="#g49" x="429" y="206"/><use href="#g48" x="435" y="206"/><use href="#g48" x="441" y="206"/><use href="#g49" x="447" y="206"/><use href="#g48" x="453" y="206"/><use href="#g48" x="459" y="206"/><use href="#g50" x="465" y="206"/><use href="#g82" x="496" y="206"/><use href="#g82" x="580" y="206"/><use href="#g87" x="586" y="206"/><use href="#g69" x="592" y="206"/><use href="#g48" x="9" y="215"/><use href="#g48" x="15" y="215"/><use href="#g52" x="21" y="215"/><use href="#g49" x="27" y="215"/><use href="#g48" x="33" y="215"/><use href="#g48" x="39" y="215"/><use href="#g48" x="45" y="215"/><use href="#g48" x="51" y="215"/><use href="#g48" x="63" y="215"/><use href="#g48" x="69" y="215"/><use href="#g49" x="75" y="215"/><use href="#g48" x="81" y="215"/><use href="#g51" x="87" y="215"/><use href="#g48" x="93" y="215"/><use href="#g48" x="99" y="215"/><use href="#g48" x="105" y="215"/><use href="#g77" x="393" y="215"/><use href="#g97" x="399" y="215"/><use href="#g112" x="405" y="215"/><use href="#g48" x="423" y="215"/><use href="#g48" x="429" y="215"/><use href="#g48" x="435" y="215"/><use href="#g52" x="441" y="215"/><use href="#g49" x="447" y="215"/><use href="#g48" x="453" y="215"/><use href="#g48" x="459" y="215"/><use href="#g50" x="465" y="215"/><use href="#g82" x="496" y="215"/><use href="#g82" x="580" y="215"/><use href="#g48" x="9" y="224"/><use href="#g48" x="15" y="224"/><use href="#g53" x="21" y="224"/><use href="#g50" x="27" y="224"/><use href="#g48" x="33" y="224"/><use href="#g48" x="39" y="224"/><use href="#g48" x="45" y="224"/><use href="#g48" x="51" y="224"/><use href="#g48" x="63" y="224"/><use href="#g48" x="69" y="224"/><use href="#g48" x="75" y="224"/><use href="#g48" x="81" y="224"/><use href="#g49" x="87" y="224"/><use href="#g48" x="93" y="224"/><use href="#g48" x="99" y="224"/><use href="#g48" x="105" y="224"/><use href="#g80" x="393" y="224"/><use href="#g114" x="399" y="224"/><use href="#g105" x="405" y="224"/><use href="#g118" x="411" y="224"/><use href="#g48" x="423" y="224"/><use href="#g48" x="429" y="224"/><use href="#g48" x="435" y="224"/><use href="#g50" x="441" y="224"/><use href="#g49" x="447" y="224"/><use href="#g48" x="453" y="224"/><use href="#g48" x="459" y="224"/><use href="#g52" x="465" y="224"/><use href="#g82" x="496" y="224"/><use href="#g87" x="502" y="224"/><use href="#g82" x="580" y="224"/><use href="#g87" x="586" y="224"/><use href="#g48" x="9" y="233"/><use href="#g48" x="15" y="233"/><use href="#g53" x="21" y="233"/><use href="#g51" x="27" y="233"/><use href="#g48" x="33" y="233"/><use href="#g48" x="39" y="233"/><use href="#g48" x="45" y="233"/><use href="#g48" x="51" y="233"/><use href="#g48" x="63" y="233"/><use href="#g48" x="69" y="233"/><use href="#g48" x="75" y="233"/><use href="#g55" x="81" y="233"/><use href="#g54" x="87" y="233"/><use href="#g48" x="93" y="233"/><use href="#g48" x="99" y="233"/><use href="#g48" x="105" y="233"/><use href="#g77" x="393" y="233"/><use href="#g97" x="399" y="233"/><use href="#g112" x="405" y="233"/><use href="#g48" x="423" y="233"/><use href="#g48" x="429" y="233"/><use href="#g48" x="435" y="233"/><use href="#g52" x="441" y="233"/><use href="#g49" x="447" y="233"/><use href="#g48" x="453" y="233"/><use href="#g50" x="459" y="233"/><use href="#g48" x="465" y="233"/><use href="#g82" x="496" y="233"/><use href="#g69" x="508" y="233"/><use href="#g82" x="580" y="233"/><use href="#g69" x="592" y="233"/><use href="#g48" x="9" y="242"/><use href="#g48" x="15" y="242"/><use href="#g56" x="21" y="242"/><use href="#g51" x="27" y="242"/><use href="#g48" x="33" y="242"/><use href="#g48" x="39" y="242"/><use href="#g48" x="45" y="242"/><use href="#g48" x="51" y="242"/><use href="#g48" x="63" y="242"/><use href="#g48" x="69" y="242"/><use href="#g48" x="75" y="242"/><use href="#g48" x="81" y="242"/><use href="#g49" x="87" y="242"/><use href="#g48" x="93" y="242"/><use href="#g48" x="99" y="242"/><use href="#g48" x="105" y="242"/><use href="#g80" x="393" y="242"/><use href="#g114" x="399" y="242"/><use href="#g105" x="405" y="242"/><use href="#g118" x="411" y="242"/><use href="#g48" x="423" y="242"/><use href="#g48" x="429" y="242"/><use href="#g48" x="435" y="242"/><use href="#g50" x="441" y="242"/><use href="#g49" x="447" y="242"/><use href="#g48" x="453" y="242"/><use href="#g48" x="459" y="242"/><use href="#g52" x="465" y="242"/><use href="#g82" x="496" y="242"/><use href="#g87" x="502" y="242"/><use href="#g82" x="580" y="242"/><use href="#g87" x="586" y="242"/><use href="#g48" x="9" y="251"/><use href="#g48" x="15" y="251"/><use href="#g56" x="21" y="251"/><use href="#g52" x="27" y="251"/><use href="#g48" x="33" y="251"/><use href="#g48" x="39" y="251"/><use href="#g48" x="45" y="251"/><use href="#g48" x="51" y="251"/><use href="#g48" x="63" y="251"/><use href="#g48" x="69" y="251"/><use href="#g48" x="75" y="251"/><use href="#g48" x="81" y="251"/><use href="#g52" x="87" y="251"/><use href="#g48" x="93" y="251"/><use href="#g48" x="99" y="251"/><use href="#g48" x="105" y="251"/><use href="#g80" x="393" y="251"/><use href="#g114" x="399" y="251"/><use href="#g105" x="405" y="251"/><use href="#g118" x="411" y="251"/><use href="#g48" x="423" y="251"/><use href="#g48" x="429" y="251"/><use href="#g48" x="435" y="251"/><use href="#g50" x="441" y="251"/><use href="#g49" x="447" y="251"/><use href="#g48" x="453" y="251"/><use href="#g48" x="459" y="251"/><use href="#g52" x="465" y="251"/><use href="#g82" x="496" y="251"/><use href="#g87" x="502" y="251"/><use href="#g82" x="580" y="251"/><use href="#g87" x="586" y="251"/><use href="#g48" x="9" y="260"/><use href="#g48" x="15" y="260"/><use href="#g56" x="21" y="260"/><use href="#g53" x="27" y="260"/><use href="#g48" x="33" y="260"/><use href="#g48" x="39" y="260"/><use href="#g48" x="45" y="260"/><use href="#g48" x="51" y="260"/><use href="#g48" x="63" y="260"/><use href="#g48" x="69" y="260"/><use href="#g48" x="75" y="260"/><use href="#g48" x="81" y="260"/><use href="#g51" x="87" y="260"/><use href="#g48" x="93" y="260"/><use href="#g48" x="99" y="260"/><use href="#g48" x="105" y="260"/><use href="#g77" x="393" y="260"/><use href="#g97" x="399" y="260"/><use href="#g112" x="405" y="260"/><use href="#g48" x="423" y="260"/><use href="#g48" x="429" y="260"/><use href="#g48" x="435" y="260"/><use href="#g52" x="441" y="260"/><use href="#g49" x="447" y="260"/><use href="#g48" x="453" y="260"/><use href="#g48" x="459" y="260"/><use href="#g50" x="465" y="260"/><use href="#g82" x="496" y="260"/><use href="#g82" x="580" y="260"/><use href="#g48" x="9" y="278"/><use href="#g48" x="15" y="278"/><use href="#g57" x="21" y="278"/><use href="#g48" x="27" y="278"/><use href="#g48" x="33" y="278"/><use href="#g48" x="39" y="278"/><use href="#g48" x="45" y="278"/><use href="#g48" x="51" y="278"/><use href="#g48" x="63" y="278"/><use href="#g48" x="69" y="278"/><use href="#g48" x="75" y="278"/><use href="#g48" x="81" y="278"/><use href="#g50" x="87" y="278"/><use href="#g48" x="93" y="278"/><use href="#g48" x="99" y="278"/><use href="#g48" x="105" y="278"/><use href="#g77" x="393" y="278"/><use href="#g97" x="399" y="278"/><use href="#g112" x="405" y="278"/><use href="#g48" x="423" y="278"/><use href="#g48" x="429" y="278"/><use href="#g48" x="435" y="278"/><use href="#g52" x="441" y="278"/><use href="#g49" x="447" y="278"/><use href="#g48" x="453" y="278"/><use href="#g48" x="459" y="278"/><use href="#g50" x="465" y="278"/><use href="#g82" x="496" y="278"/><use href="#g82" x="580" y="278"/><use href="#g53" x="9" y="296"/><use href="#g68" x="15" y="296"/><use href="#g48" x="21" y="296"/><use href="#g57" x="27" y="296"/><use href="#g48" x="33" y="296"/><use href="#g48" x="39" y="296"/><use href="#g48" x="45" y="296"/><use href="#g48" x="51" y="296"/><use href="#g48" x="63" y="296"/><use href="#g48" x="69" y="296"/><use href="#g48" x="75" y="296"/><use href="#g48" x="81" y="296"/><use href="#g49" x="87" y="296"/><use href="#g48" x="93" y="296"/><use href="#g48" x="99" y="296"/><use href="#g48" x="105" y="296"/><use href="#g99" x="117" y="296"/><use href="#g111" x="123" y="296"/><use href="#g109" x="129" y="296"/><use href="#g99" x="135" y="296"/><use href="#g116" x="141" y="296"/><use href="#g108" x="147" y="296"/><use href="#g51" x="153" y="296"/><use href="#g50" x="159" y="296"/><use href="#g80" x="230" y="296"/><use href="#g69" x="236" y="296"/><use href="#g104" x="248" y="296"/><use href="#g101" x="254" y="296"/><use href="#g97" x="260" y="296"/><use href="#g100" x="266" y="296"/><use href="#g101" x="272" y="296"/><use href="#g114" x="278" y="296"/><use href="#g73" x="393" y="296"/><use href="#g109" x="399" y="296"/><use href="#g97" x="405" y="296"/><use href="#g103" x="411" y="296"/><use href="#g48" x="423" y="296"/><use href="#g49" x="429" y="296"/><use href="#g48" x="435" y="296"/><use href="#g48" x="441" y="296"/><use href="#g49" x="447" y="296"/><use href="#g48" x="453" y="296"/><use href="#g48" x="459" y="296"/><use href="#g50" x="465" y="296"/><use href="#g82" x="496" y="296"/><use href="#g82" x="580" y="296"/><use href="#g87" x="586" y="296"/><use href="#g69" x="592" y="296"/><use href="#g53" x="9" y="305"/><use href="#g68" x="15" y="305"/><use href="#g48" x="21" y="305"/><use href="#g57" x="27" y="305"/><use href="#g49" x="33" y="305"/><use href="#g48" x="39" y="305"/><use href="#g48" x="45" y="305"/><use href="#g48" x="51" y="305"/><use href="#g48" x="63" y="305"/><use href="#g48" x="69" y="305"/><use href="#g48" x="75" y="305"/><use href="#g55" x="81" y="305"/><use href="#g49" x="87" y="305"/><use href="#g48" x="93" y="305"/><use href="#g48" x="99" y="305"/><use href="#g48" x="105" y="305"/><use href="#g99" x="117" y="305"/><use href="#g111" x="123" y="305"/><use href="#g109" x="129" y="305"/><use href="#g99" x="135" y="305"/><use href="#g116" x="141" y="305"/><use href="#g108" x="147" y="305"/><use href="#g51" x="153" y="305"/><use href="#g50" x="159" y="305"/><use href="#g46" x="176" y="305"/><use href="#g116" x="182" y="305"/><use href="#g101" x="188" y="305"/><use href="#g120" x="194" y="305"/><use href="#g116" x="200" y="305"/><use href="#g83" x="230" y="305"/><use href="#g70" x="236" y="305"/><use href="#g88" x="242" y="305"/><use href="#g44" x="248" y="305"/><use href="#g99" x="254" y="305"/><use href="#g111" x="260" y="305"/><use href="#g100" x="266" y="305"/><use href="#g101" x="272" y="305"/><use href="#g44" x="278" y="305"/><use href="#g105" x="284" y="305"/><use href="#g109" x="290" y="305"/><use href="#g112" x="296" y="305"/><use href="#g111" x="302" y="305"/><use href="#g114" x="308" y="305"/><use href="#g116" x="314" y="305"/><use href="#g115" x="320" y="305"/><use href="#g44" x="326" y="305"/><use href="#g101" x="332" y="305"/><use href="#g120" x="338" y="305"/><use href="#g112" x="344" y="305"/><use href="#g111" x="350" y="305"/><use href="#g114" x="356" y="305"/><use href="#g116" x="362" y="305"/><use href="#g115" x="368" y="305"/><use href="#g73" x="393" y="305"/><use href="#g109" x="399" y="305"/><use href="#g97" x="405" y="305"/><use href="#g103" x="411" y="305"/><use href="#g48" x="423" y="305"/><use href="#g49" x="429" y="305"/><use href="#g48" x="435" y="305"/><use href="#g48" x="441" y="305"/><use href="#g49" x="447" y="305"/><use href="#g48" x="453" y="305"/><use href="#g48" x="459" y="305"/><use href="#g50" x="465" y="305"/><use href="#g82" x="496" y="305"/><use href="#g82" x="580" y="305"/><use href="#g87" x="586" y="305"/><use href="#g69" x="592" y="305"/><use href="#g53" x="9" y="314"/><use href="#g68" x="15" y="314"/><use href="#g49" x="21" y="314"/><use href="#g48" x="27" y="314"/><use href="#g50" x="33" y="314"/><use href="#g48" x="39" y="314"/><use href="#g48" x="45" y="314"/><use href="#g48" x="51" y="314"/><use href="#g48" x="63" y="314"/><use href="#g48" x="69" y="314"/><use href="#g48" x="75" y="314"/><use href="#g48" x="81" y="314"/><use href="#g51" x="87" y="314"/><use href="#g48" x="93" y="314"/><use href="#g48" x="99" y="314"/><use href="#g48" x="105" y="314"/><use href="#g99" x="117" y="314"/><use href="#g111" x="123" y="314"/><use href="#g109" x="129" y="314"/><use href="#g99" x="135" y="314"/><use href="#g116" x="141" y="314"/><use href="#g108" x="147" y="314"/><use href="#g51" x="153" y="314"/><use href="#g50" x="159" y="314"/><use href="#g46" x="176" y="314"/><use href="#g100" x="182" y="314"/><use href="#g97" x="188" y="314"/><use href="#g116" x="194" y="314"/><use href="#g97" x="200" y="314"/><use href="#g73" x="393" y="314"/><use href="#g109" x="399" y="314"/><use href="#g97" x="405" y="314"/><use href="#g103" x="411" y="314"/><use href="#g48" x="423" y="314"/><use href="#g49" x="429" y="314"/><use href="#g48" x="435" y="314"/><use href="#g48" x="441" y="314"/><use href="#g49" x="447" y="314"/><use href="#g48" x="453" y="314"/><use href="#g48" x="459" y="314"/><use href="#g50" x="465" y="314"/><use href="#g82" x="496" y="314"/><use href="#g82" x="580" y="314"/><use href="#g87" x="586" y="314"/><use href="#g69" x="592" y="314"/><use href="#g53" x="9" y="323"/><use href="#g68" x="15" y="323"/><use href="#g49" x="21" y="323"/><use href="#g48" x="27" y="323"/><use href="#g53" x="33" y="323"/><use href="#g48" x="39" y="323"/><use href="#g48" x="45" y="323"/><use href="#g48" x="51" y="323"/><use href="#g48" x="63" y="323"/><use href="#g48" x="69" y="323"/><use href="#g48" x="75" y="323"/><use href="#g50" x="81" y="323"/><use href="#g48" x="87" y="323"/><use href="#g48" x="93" y="323"/><use href="#g48" x="99" y="323"/><use href="#g48" x="105" y="323"/><use href="#g99" x="117" y="323"/><use href="#g111" x="123" y="323"/><use href="#g109" x="129" y="323"/><use href="#g99" x="135" y="323"/><use href="#g116" x="141" y="323"/><use href="#g108" x="147" y="323"/><use href="#g51" x="153" y="323"/><use href="#g50" x="159" y="323"/><use href="#g46" x="176" y="323"/><use href="#g114" x="182" y="323"/><use href="#g115" x="188" y="323"/><use href="#g114" x="194" y="323"/><use href="#g99" x="200" y="323"/><use href="#g114" x="230" y="323"/><use href="#g101" x="236" y="323"/><use href="#g115" x="242" y="323"/><use href="#g111" x="248" y="323"/><use href="#g117" x="254" y="323"/><use href="#g114" x="260" y="323"/><use href="#g99" x="266" y="323"/><use href="#g101" x="272" y="323"/><use href="#g115" x="278" y="323"/><use href="#g73" x="393" y="323"/><use href="#g109" x="399" y="323"/><use href="#g97" x="405" y="323"/><use href="#g103" x="411" y="323"/><use href="#g48" x="423" y="323"/><use href="#g49" x="429" y="323"/><use href="#g48" x="435" y="323"/><use href="#g48" x="441" y="323"/><use href="#g49" x="447" y="323"/><use href="#g48" x="453" y="323"/><use href="#g48" x="459" y="323"/><use href="#g50" x="465" y="323"/><use href="#g82" x="496" y="323"/><use href="#g82" x="580" y="323"/><use href="#g87" x="586" y="323"/><use href="#g69" x="592" y="323"/><use href="#g53" x="9" y="332"/><use href="#g68" x="15" y="332"/><use href="#g49" x="21" y="332"/><use href="#g50" x="27" y="332"/><use href="#g53" x="33" y="332"/><use href="#g48" x="39" y="332"/><use href="#g48" x="45" y="332"/><use href="#g48" x="51" y="332"/><use href="#g48" x="63" y="332"/><use href="#g48" x="69" y="332"/><use href="#g48" x="75" y="332"/><use href="#g48" x="81" y="332"/><use href="#g53" x="87" y="332"/><use href="#g48" x="93" y="332"/><use href="#g48" x="99" y="332"/><use href="#g48" x="105" y="332"/><use href="#g99" x="117" y="332"/><use href="#g111" x="123" y="332"/><use href="#g109" x="129" y="332"/><use href="#g99" x="135" y="332"/><use href="#g116" x="141" y="332"/><use href="#g108" x="147" y="332"/><use href="#g51" x="153" y="332"/><use href="#g50" x="159" y="332"/><use href="#g46" x="176" y="332"/><use href="#g114" x="182" y="332"/><use href="#g101" x="188" y="332"/><use href="#g108" x="194" y="332"/><use href="#g111" x="200" y="332"/><use href="#g99" x="206" y="332"/><use href="#g73" x="393" y="332"/><use href="#g109" x="399" y="332"/><use href="#g97" x="405" y="332"/><use href="#g103" x="411" y="332"/><use href="#g48" x="423" y="332"/><use href="#g49" x="429" y="332"/><use href="#g48" x="435" y="332"/><use href="#g48" x="441" y="332"/><use href="#g49" x="447" y="332"/><use href="#g48" x="453" y="332"/><use href="#g48" x="459" y="332"/><use href="#g50" x="465" y="332"/><use href="#g82" x="496" y="332"/><use href="#g82" x="580" y="332"/><use href="#g87" x="586" y="332"/><use href="#g69" x="592" y="332"/><use href="#g55" x="9" y="341"/><use href="#g54" x="15" y="341"/><use href="#g51" x="21" y="341"/><use href="#g57" x="27" y="341"/><use href="#g48" x="33" y="341"/><use href="#g48" x="39" y="341"/><use href="#g48" x="45" y="341"/><use href="#g48" x="51" y="341"/><use href="#g48" x="63" y="341"/><use href="#g48" x="69" y="341"/><use href="#g48" x="75" y="341"/><use href="#g48" x="81" y="341"/><use href="#g49" x="87" y="341"/><use href="#g48" x="93" y="341"/><use href="#g48" x="99" y="341"/><use href="#g48" x="105" y="341"/><use href="#g105" x="117" y="341"/><use href="#g109" x="123" y="341"/><use href="#g109" x="129" y="341"/><use href="#g51" x="135" y="341"/><use href="#g50" x="141" y="341"/><use href="#g80" x="230" y="341"/><use href="#g69" x="236" y="341"/><use href="#g104" x="248" y="341"/><use href="#g101" x="254" y="341"/><use href="#g97" x="260" y="341"/><use href="#g100" x="266" y="341"/><use href="#g101" x="272" y="341"/><use href="#g114" x="278" y="341"/><use href="#g73" x="393" y="341"/><use href="#g109" x="399" y="341"/><use href="#g97" x="405" y="341"/><use href="#g103" x="411" y="341"/><use href="#g48" x="423" y="341"/><use href="#g49" x="429" y="341"/><use href="#g48" x="435" y="341"/><use href="#g48" x="441" y="341"/><use href="#g49" x="447" y="341"/><use href="#g48" x="453" y="341"/><use href="#g48" x="459" y="341"/><use href="#g50" x="465" y="341"/><use href="#g82" x="496" y="341"/><use href="#g82" x="580" y="341"/><use href="#g87" x="586" y="341"/><use href="#g69" x="592" y="341"/><use href="#g55" x="9" y="350"/><use href="#g54" x="15" y="350"/><use href="#g51" x="21" y="350"/><use href="#g57" x="27" y="350"/><use href="#g49" x="33" y="350"/><use href="#g48" x="39" y="350"/><use href="#g48" x="45" y="350"/><use href="#g48" x="51" y="350"/><use href="#g48" x="63" y="350"/><use href="#g48" x="69" y="350"/><use href="#g48" x="75" y="350"/><use href="#g49" x="81" y="350"/><use href="#g53" x="87" y="350"/><use href="#g48" x="93" y="350"/><use href="#g48" x="99" y="350"/><use href="#g48" x="105" y="350"/><use href="#g105" x="117" y="350"/><use href="#g109" x="123" y="350"/><use href="#g109" x="129" y="350"/><use href="#g51" x="135" y="350"/><use href="#g50" x="141" y="350"/><use href="#g46" x="176" y="350"/><use href="#g116" x="182" y="350"/><use href="#g101" x="188" y="350"/><use href="#g120" x="194" y="350"/><use href="#g116" x="200" y="350"/><use href="#g83" x="230" y="350"/><use href="#g70" x="236" y="350"/><use href="#g88" x="242" y="350"/><use href="#g44" x="248" y="350"/><use href="#g99" x="254" y="350"/><use href="#g111" x="260" y="350"/><use href="#g100" x="266" y="350"/><use href="#g101" x="272" y="350"/><use href="#g44" x="278" y="350"/><use href="#g105" x="284" y="350"/><use href="#g109" x="290" y="350"/><use href="#g112" x="296" y="350"/><use href="#g111" x="302" y="350"/><use href="#g114" x="308" y="350"/><use href="#g116" x="314" y="350"/><use href="#g115" x="320" y="350"/><use href="#g44" x="326" y="350"/><use href="#g101" x="332" y="350"/><use href="#g120" x="338" y="350"/><use href="#g112" x="344" y="350"/><use href="#g111" x="350" y="350"/><use href="#g114" x="356" y="350"/><use href="#g116" x="362" y="350"/><use href="#g115" x="368" y="350"/><use href="#g73" x="393" y="350"/><use href="#g109" x="399" y="350"/><use href="#g97" x="405" y="350"/><use href="#g103" x="411" y="350"/><use href="#g48" x="423" y="350"/><use href="#g49" x="429" y="350"/><use href="#g48" x="435" y="350"/><use href="#g48" x="441" y="350"/><use href="#g49" x="447" y="350"/><use href="#g48" x="453" y="350"/><use href="#g48" x="459" y="350"/><use href="#g50" x="465" y="350"/><use href="#g82" x="496" y="350"/><use href="#g82" x="580" y="350"/><use href="#g87" x="586" y="350"/><use href="#g69" x="592" y="350"/><use href="#g55" x="9" y="359"/><use href="#g54" x="15" y="359"/><use href="#g51" x="21" y="359"/><use href="#g65" x="27" y="359"/><use href="#g54" x="33" y="359"/><use href="#g48" x="39" y="359"/><use href="#g48" x="45" y="359"/><use href="#g48" x="51" y="359"/><use href="#g48" x="63" y="359"/><use href="#g48" x="69" y="359"/><use href="#g48" x="75" y="359"/><use href="#g48" x="81" y="359"/><use href="#g49" x="87" y="359"/><use href="#g48" x="93" y="359"/><use href="#g48" x="99" y="359"/><use href="#g48" x="105" y="359"/><use href="#g105" x="117" y="359"/><use href="#g109" x="123" y="359"/><use href="#g109" x="129" y="359"/><use href="#g51" x="135" y="359"/><use href="#g50" x="141" y="359"/><use href="#g46" x="176" y="359"/><use href="#g100" x="182" y="359"/><use href="#g97" x="188" y="359"/><use href="#g116" x="194" y="359"/><use href="#g97" x="200" y="359"/><use href="#g100" x="230" y="359"/><use href="#g97" x="236" y="359"/><use href="#g116" x="242" y="359"/><use href="#g97" x="248" y="359"/><use href="#g73" x="393" y="359"/><use href="#g109" x="399" y="359"/><use href="#g97" x="405" y="359"/><use href="#g103" x="411" y="359"/><use href="#g48" x="423" y="359"/><use href="#g49" x="429" y="359"/><use href="#g48" x="435" y="359"/><use href="#g48" x="441" y="359"/><use href="#g49" x="447" y="359"/><use href="#g48" x="453" y="359"/><use href="#g48" x="459" y="359"/><use href="#g50" x="465" y="359"/><use href="#g82" x="496" y="359"/><use href="#g82" x="580" y="359"/><use href="#g87" x="586" y="359"/><use href="#g69" x="592" y="359"/><use href="#g55" x="9" y="368"/><use href="#g54" x="15" y="368"/><use href="#g51" x="21" y="368"/><use href="#g65" x="27" y="368"/><use href="#g55" x="33" y="368"/><use href="#g48" x="39" y="368"/><use href="#g48" x="45" y="368"/><use href="#g48" x="51" y="368"/><use href="#g48" x="63" y="368"/><use href="#g48" x="69" y="368"/><use href="#g48" x="75" y="368"/><use href="#g48" x="81" y="368"/><use href="#g53" x="87" y="368"/><use href="#g48" x="93" y="368"/><use href="#g48" x="99" y="368"/><use href="#g48" x="105" y="368"/><use href="#g105" x="117" y="368"/><use href="#g109" x="123" y="368"/><use href="#g109" x="129" y="368"/><use href="#g51" x="135" y="368"/><use href="#g50" x="141" y="368"/><use href="#g46" x="176" y="368"/><use href="#g114" x="182" y="368"/><use href="#g115" x="188" y="368"/><use href="#g114" x="194" y="368"/><use href="#g99" x="200" y="368"/><use href="#g114" x="230" y="368"/><use href="#g101" x="236" y="368"/><use href="#g115" x="242" y="368"/><use href="#g111" x="248" y="368"/><use href="#g117" x="254" y="368"/><use href="#g114" x="260" y="368"/><use href="#g99" x="266" y="368"/><use href="#g101" x="272" y="368"/><use href="#g115" x="278" y="368"/><use href="#g73" x="393" y="368"/><use href="#g109" x="399" y="368"/><use href="#g97" x="405" y="368"/><use href="#g103" x="411" y="368"/><use href="#g48" x="423" y="368"/><use href="#g49" x="429" y="368"/><use href="#g48" x="435" y="368"/><use href="#g48" x="441" y="368"/><use href="#g49" x="447" y="368"/><use href="#g48" x="453" y="368"/><use href="#g48" x="459" y="368"/><use href="#g50" x="465" y="368"/><use href="#g82" x="496" y="368"/><use href="#g82" x="580" y="368"/><use href="#g87" x="586" y="368"/><use href="#g69" x="592" y="368"/><use href="#g55" x="9" y="377"/><use href="#g54" x="15" y="377"/><use href="#g51" x="21" y="377"/><use href="#g65" x="27" y="377"/><use href="#g67" x="33" y="377"/><use href="#g48" x="39" y="377"/><use href="#g48" x="45" y="377"/><use href="#g48" x="51" y="377"/><use href="#g48" x="63" y="377"/><use href="#g48" x="69" y="377"/><use href="#g48" x="75" y="377"/><use href="#g48" x="81" y="377"/><use href="#g49" x="87" y="377"/><use href="#g48" x="93" y="377"/><use href="#g48" x="99" y="377"/><use href="#g48" x="105" y="377"/><use href="#g105" x="117" y="377"/><use href="#g109" x="123" y="377"/><use href="#g109" x="129" y="377"/><use href="#g51" x="135" y="377"/><use href="#g50" x="141" y="377"/><use href="#g46" x="176" y="377"/><use href="#g114" x="182" y="377"/><use href="#g101" x="188" y="377"/><use href="#g108" x="194" y="377"/><use href="#g111" x="200" y="377"/><use href="#g99" x="206" y="377"/><use href="#g73" x="393" y="377"/><use href="#g109" x="399" y="377"/><use href="#g97" x="405" y="377"/><use href="#g103" x="411" y="377"/><use href="#g48" x="423" y="377"/><use href="#g49" x="429" y="377"/><use href="#g48" x="435" y="377"/><use href="#g48" x="441" y="377"/><use href="#g49" x="447" y="377"/><use href="#g48" x="453" y="377"/><use href="#g48" x="459" y="377"/><use href="#g50" x="465" y="377"/><use href="#g82" x="496" y="377"/><use href="#g82" x="580" y="377"/><use href="#g87" x="586" y="377"/><use href="#g69" x="592" y="377"/><use href="#g55" x="9" y="386"/><use href="#g55" x="15" y="386"/><use href="#g68" x="21" y="386"/><use href="#g68" x="27" y="386"/><use href="#g48" x="33" y="386"/><use href="#g48" x="39" y="386"/><use href="#g48" x="45" y="386"/><use href="#g48" x="51" y="386"/><use href="#g48" x="63" y="386"/><use href="#g48" x="69" y="386"/><use href="#g48" x="75" y="386"/><use href="#g48" x="81" y="386"/><use href="#g49" x="87" y="386"/><use href="#g48" x="93" y="386"/><use href="#g48" x="99" y="386"/><use href="#g48" x="105" y="386"/><use href="#g97" x="117" y="386"/><use href="#g100" x="123" y="386"/><use href="#g118" x="129" y="386"/><use href="#g97" x="135" y="386"/><use href="#g112" x="141" y="386"/><use href="#g105" x="147" y="386"/><use href="#g51" x="153" y="386"/><use href="#g50" x="159" y="386"/><use href="#g80" x="230" y="386"/><use href="#g69" x="236" y="386"/><use href="#g104" x="248" y="386"/><use href="#g101" x="254" y="386"/><use href="#g97" x="260" y="386"/><use href="#g100" x="266" y="386"/><use href="#g101" x="272" y="386"/><use href="#g114" x="278" y="386"/><use href="#g73" x="393" y="386"/><use href="#g109" x="399" y="386"/><use href="#g97" x="405" y="386"/><use href="#g103" x="411" y="386"/><use href="#g48" x="423" y="386"/><use href="#g49" x="429" y="386"/><use href="#g48" x="435" y="386"/><use href="#g48" x="441" y="386"/><use href="#g49" x="447" y="386"/><use href="#g48" x="453" y="386"/><use href="#g48" x="459" y="386"/><use href="#g50" x="465" y="386"/><use href="#g82" x="496" y="386"/><use href="#g82" x="580" y="386"/><use href="#g87" x="586" y="386"/><use href="#g69" x="592" y="386"/><use href="#g55" x="9" y="395"/><use href="#g55" x="15" y="395"/><use href="#g68" x="21" y="395"/><use href="#g68" x="27" y="395"/><use href="#g49" x="33" y="395"/><use href="#g48" x="39" y="395"/><use href="#g48" x="45" y="395"/><use href="#g48" x="51" y="395"/><use href="#g48" x="63" y="395"/><use href="#g48" x="69" y="395"/><use href="#g48" x="75" y="395"/><use href="#g55" x="81" y="395"/><use href="#g53" x="87" y="395"/><use href="#g48" x="93" y="395"/><use href="#g48" x="99" y="395"/><use href="#g48" x="105" y="395"/><use href="#g97" x="117" y="395"/><use href="#g100" x="123" y="395"/><use href="#g118" x="129" y="395"/><use href="#g97" x="135" y="395"/><use href="#g112" x="141" y="395"/><use href="#g105" x="147" y="395"/><use href="#g51" x="153" y="395"/><use href="#g50" x="159" y="395"/><use href="#g46" x="176" y="395"/><use href="#g116" x="182" y="395"/><use href="#g101" x="188" y="395"/><use href="#g120" x="194" y="395"/><use href="#g116" x="200" y="395"/><use href="#g83" x="230" y="395"/><use href="#g70" x="236" y="395"/><use href="#g88" x="242" y="395"/><use href="#g44" x="248" y="395"/><use href="#g99" x="254" y="395"/><use href="#g111" x="260" y="395"/><use href="#g100" x="266" y="395"/><use href="#g101" x="272" y="395"/><use href="#g44" x="278" y="395"/><use href="#g105" x="284" y="395"/><use href="#g109" x="290" y="395"/><use href="#g112" x="296" y="395"/><use href="#g111" x="302" y="395"/><use href="#g114" x="308" y="395"/><use href="#g116" x="314" y="395"/><use href="#g115" x="320" y="395"/><use href="#g44" x="326" y="395"/><use href="#g101" x="332" y="395"/><use href="#g120" x="338" y="395"/><use href="#g112" x="344" y="395"/><use href="#g111" x="350" y="395"/><use href="#g114" x="356" y="395"/><use href="#g116" x="362" y="395"/><use href="#g115" x="368" y="395"/><use href="#g73" x="393" y="395"/><use href="#g109" x="399" y="395"/><use href="#g97" x="405" y="395"/><use href="#g103" x="411" y="395"/><use href="#g48" x="423" y="395"/><use href="#g49" x="429" y="395"/><use href="#g48" x="435" y="395"/><use href="#g48" x="441" y="395"/><use href="#g49" x="447" y="395"/><use href="#g48" x="453" y="395"/><use href="#g48" x="459" y="395"/><use href="#g50" x="465" y="395"/><use href="#g82" x="496" y="395"/><use href="#g82" x="580" y="395"/><use href="#g87" x="586" y="395"/><use href="#g69" x="592" y="395"/><use href="#g55" x="9" y="404"/><use href="#g55" x="15" y="404"/><use href="#g69" x="21" y="404"/><use href="#g52" x="27" y="404"/><use href="#g54" x="33" y="404"/><use href="#g48" x="39" y="404"/><use href="#g48" x="45" y="404"/><use href="#g48" x="51" y="404"/><use href="#g48" x="63" y="404"/><use href="#g48" x="69" y="404"/><use href="#g48" x="75" y="404"/><use href="#g48" x="81" y="404"/><use href="#g53" x="87" y="404"/><use href="#g48" x="93" y="404"/><use href="#g48" x="99" y="404"/><use href="#g48" x="105" y="404"/><use href="#g97" x="117" y="404"/><use href="#g100" x="123" y="404"/><use href="#g118" x="129" y="404"/><use href="#g97" x="135" y="404"/><use href="#g112" x="141" y="404"/><use href="#g105" x="147" y="404"/><use href="#g51" x="153" y="404"/><use href="#g50" x="159" y="404"/><use href="#g46" x="176" y="404"/><use href="#g100" x="182" y="404"/><use href="#g97" x="188" y="404"/><use href="#g116" x="194" y="404"/><use href="#g97" x="200" y="404"/><use href="#g73" x="393" y="404"/><use href="#g109" x="399" y="404"/><use href="#g97" x="405" y="404"/><use href="#g103" x="411" y="404"/><use href="#g48" x="423" y="404"/><use href="#g49" x="429" y="404"/><use href="#g48" x="435" y="404"/><use href="#g48" x="441" y="404"/><use href="#g49" x="447" y="404"/><use href="#g48" x="453" y="404"/><use href="#g48" x="459" y="404"/><use href="#g50" x="465" y="404"/><use href="#g82" x="496" y="404"/><use href="#g82" x="580" y="404"/><use href="#g87" x="586" y="404"/><use href="#g69" x="592" y="404"/><use href="#g55" x="9" y="413"/><use href="#g55" x="15" y="413"/><use href="#g69" x="21" y="413"/><use href="#g52" x="27" y="413"/><use href="#g66" x="33" y="413"/><use href="#g48" x="39" y="413"/><use href="#g48" x="45" y="413"/><use href="#g48" x="51" y="413"/><use href="#g48" x="63" y="413"/><use href="#g48" x="69" y="413"/><use href="#g48" x="75" y="413"/><use href="#g49" x="81" y="413"/><use href="#g66" x="87" y="413"/><use href="#g48" x="93" y="413"/><use href="#g48" x="99" y="413"/><use href="#g48" x="105" y="413"/><use href="#g97" x="117" y="413"/><use href="#g100" x="123" y="413"/><use href="#g118" x="129" y="413"/><use href="#g97" x="135" y="413"/><use href="#g112" x="141" y="413"/><use href="#g105" x="147" y="413"/><use href="#g51" x="153" y="413"/><use href="#g50" x="159" y="413"/><use href="#g46" x="176" y="413"/><use href="#g114" x="182" y="413"/><use href="#g115" x="188" y="413"/><use href="#g114" x="194" y="413"/><use href="#g99" x="200" y="413"/><use href="#g114" x="230" y="413"/><use href="#g101" x="236" y="413"/><use href="#g115" x="242" y="413"/><use href="#g111" x="248" y="413"/><use href="#g117" x="254" y="413"/><use href="#g114" x="260" y="413"/><use href="#g99" x="266" y="413"/><use href="#g101" x="272" y="413"/><use href="#g115" x="278" y="413"/><use href="#g73" x="393" y="413"/><use href="#g109" x="399" y="413"/><use href="#g97" x="405" y="413"/><use href="#g103" x="411" y="413"/><use href="#g48" x="423" y="413"/><use href="#g49" x="429" y="413"/><use href="#g48" x="435" y="413"/><use href="#g48" x="441" y="413"/><use href="#g49" x="447" y="413"/><use href="#g48" x="453" y="413"/><use href="#g48" x="459" y="413"/><use href="#g50" x="465" y="413"/><use href="#g82" x="496" y="413"/><use href="#g82" x="580" y="413"/><use href="#g87" x="586" y="413"/><use href="#g69" x="592" y="413"/><use href="#g55" x="9" y="422"/><use href="#g55" x="15" y="422"/><use href="#g69" x="21" y="422"/><use href="#g54" x="27" y="422"/><use href="#g54" x="33" y="422"/><use href="#g48" x="39" y="422"/><use href="#g48" x="45" y="422"/><use href="#g48" x="51" y="422"/><use href="#g48" x="63" y="422"/><use href="#g48" x="69" y="422"/><use href="#g48" x="75" y="422"/><use href="#g48" x="81" y="422"/><use href="#g53" x="87" y="422"/><use href="#g48" x="93" y="422"/><use href="#g48" x="99" y="422"/><use href="#g48" x="105" y="422"/><use href="#g97" x="117" y="422"/><use href="#g100" x="123" y="422"/><use href="#g118" x="129" y="422"/><use href="#g97" x="135" y="422"/><use href="#g112" x="141" y="422"/><use href="#g105" x="147" y="422"/><use href="#g51" x="153" y="422"/><use href="#g50" x="159" y="422"/><use href="#g46" x="176" y="422"/><use href="#g114" x="182" y="422"/><use href="#g101" x="188" y="422"/><use href="#g108" x="194" y="422"/><use href="#g111" x="200" y="422"/><use href="#g99" x="206" y="422"/><use href="#g73" x="393" y="422"/><use href="#g109" x="399" y="422"/><use href="#g97" x="405" y="422"/><use href="#g103" x="411" y="422"/><use href="#g48" x="423" y="422"/><use href="#g49" x="429" y="422"/><use href="#g48" x="435" y="422"/><use href="#g48" x="441" y="422"/><use href="#g49" x="447" y="422"/><use href="#g48" x="453" y="422"/><use href="#g48" x="459" y="422"/><use href="#g50" x="465" y="422"/><use href="#g82" x="496" y="422"/><use href="#g82" x="580" y="422"/><use href="#g87" x="586" y="422"/><use href="#g69" x="592" y="422"/><use href="#g55" x="9" y="431"/><use href="#g55" x="15" y="431"/><use href="#g69" x="21" y="431"/><use href="#g55" x="27" y="431"/><use href="#g48" x="33" y="431"/><use href="#g48" x="39" y="431"/><use href="#g48" x="45" y="431"/><use href="#g48" x="51" y="431"/><use href="#g48" x="63" y="431"/><use href="#g48" x="69" y="431"/><use href="#g48" x="75" y="431"/><use href="#g48" x="81" y="431"/><use href="#g49" x="87" y="431"/><use href="#g48" x="93" y="431"/><use href="#g48" x="99" y="431"/><use href="#g48" x="105" y="431"/><use href="#g114" x="117" y="431"/><use href="#g112" x="123" y="431"/><use href="#g99" x="129" y="431"/><use href="#g114" x="135" y="431"/><use href="#g116" x="141" y="431"/><use href="#g52" x="147" y="431"/><use href="#g80" x="230" y="431"/><use href="#g69" x="236" y="431"/><use href="#g104" x="248" y="431"/><use href="#g101" x="254" y="431"/><use href="#g97" x="260" y="431"/><use href="#g100" x="266" y="431"/><use href="#g101" x="272" y="431"/><use href="#g114" x="278" y="431"/><use href="#g73" x="393" y="431"/><use href="#g109" x="399" y="431"/><use href="#g97" x="405" y="431"/><use href="#g103" x="411" y="431"/><use href="#g48" x="423" y="431"/><use href="#g49" x="429" y="431"/><use href="#g48" x="435" y="431"/><use href="#g48" x="441" y="431"/><use href="#g49" x="447" y="431"/><use href="#g48" x="453" y="431"/><use href="#g48" x="459" y="431"/><use href="#g50" x="465" y="431"/><use href="#g82" x="496" y="431"/><use href="#g82" x="580" y="431"/><use href="#g87" x="586" y="431"/><use href="#g69" x="592" y="431"/><use href="#g55" x="9" y="440"/><use href="#g55" x="15" y="440"/><use href="#g69" x="21" y="440"/><use href="#g55" x="27" y="440"/><use href="#g49" x="33" y="440"/><use href="#g48" x="39" y="440"/><use href="#g48" x="45" y="440"/><use href="#g48" x="51" y="440"/><use href="#g48" x="63" y="440"/><use href="#g48" x="69" y="440"/><use href="#g48" x="75" y="440"/><use href="#g56" x="81" y="440"/><use href="#g52" x="87" y="440"/><use href="#g48" x="93" y="440"/><use href="#g48" x="99" y="440"/><use href="#g48" x="105" y="440"/><use href="#g114" x="117" y="440"/><use href="#g112" x="123" y="440"/><use href="#g99" x="129" y="440"/><use href="#g114" x="135" y="440"/><use href="#g116" x="141" y="440"/><use href="#g52" x="147" y="440"/><use href="#g46" x="176" y="440"/><use href="#g116" x="182" y="440"/><use href="#g101" x="188" y="440"/><use href="#g120" x="194" y="440"/><use href="#g116" x="200" y="440"/><use href="#g83" x="230" y="440"/><use href="#g70" x="236" y="440"/><use href="#g88" x="242" y="440"/><use href="#g44" x="248" y="440"/><use href="#g99" x="254" y="440"/><use href="#g111" x="260" y="440"/><use href="#g100" x="266" y="440"/><use href="#g101" x="272" y="440"/><use href="#g44" x="278" y="440"/><use href="#g105" x="284" y="440"/><use href="#g109" x="290" y="440"/><use href="#g112" x="296" y="440"/><use href="#g111" x="302" y="440"/><use href="#g114" x="308" y="440"/><use href="#g116" x="314" y="440"/><use href="#g115" x="320" y="440"/><use href="#g44" x="326" y="440"/><use href="#g101" x="332" y="440"/><use href="#g120" x="338" y="440"/><use href="#g112" x="344" y="440"/><use href="#g111" x="350" y="440"/><use href="#g114" x="356" y="440"/><use href="#g116" x="362" y="440"/><use href="#g115" x="368" y="440"/><use href="#g73" x="393" y="440"/><use href="#g109" x="399" y="440"/><use href="#g97" x="405" y="440"/><use href="#g103" x="411" y="440"/><use href="#g48" x="423" y="440"/><use href="#g49" x="429" y="440"/><use href="#g48" x="435" y="440"/><use href="#g48" x="441" y="440"/><use href="#g49" x="447" y="440"/><use href="#g48" x="453" y="440"/><use href="#g48" x="459" y="440"/><use href="#g50" x="465" y="440"/><use href="#g82" x="496" y="440"/><use href="#g82" x="580" y="440"/><use href="#g87" x="586" y="440"/><use href="#g69" x="592" y="440"/><use href="#g55" x="9" y="449"/><use href="#g55" x="15" y="449"/><use href="#g69" x="21" y="449"/><use href="#g70" x="27" y="449"/><use href="#g53" x="33" y="449"/><use href="#g48" x="39" y="449"/><use href="#g48" x="45" y="449"/><use href="#g48" x="51" y="449"/><use href="#g48" x="63" y="449"/><use href="#g48" x="69" y="449"/><use href="#g48" x="75" y="449"/><use href="#g48" x="81" y="449"/><use href="#g55" x="87" y="449"/><use href="#g48" x="93" y="449"/><use href="#g48" x="99" y="449"/><use href="#g48" x="105" y="449"/><use href="#g114" x="117" y="449"/><use href="#g112" x="123" y="449"/><use href="#g99" x="129" y="449"/><use href="#g114" x="135" y="449"/><use href="#g116" x="141" y="449"/><use href="#g52" x="147" y="449"/><use href="#g46" x="176" y="449"/><use href="#g111" x="182" y="449"/><use href="#g114" x="188" y="449"/><use href="#g112" x="194" y="449"/><use href="#g99" x="200" y="449"/><use href="#g99" x="230" y="449"/><use href="#g111" x="236" y="449"/><use href="#g100" x="242" y="449"/><use href="#g101" x="248" y="449"/><use href="#g73" x="393" y="449"/><use href="#g109" x="399" y="449"/><use href="#g97" x="405" y="449"/><use href="#g103" x="411" y="449"/><use href="#g48" x="423" y="449"/><use href="#g49" x="429" y="449"/><use href="#g48" x="435" y="449"/><use href="#g48" x="441" y="449"/><use href="#g49" x="447" y="449"/><use href="#g48" x="453" y="449"/><use href="#g48" x="459" y="449"/><use href="#g50" x="465" y="449"/><use href="#g82" x="496" y="449"/><use href="#g82" x="580" y="449"/><use href="#g87" x="586" y="449"/><use href="#g69" x="592" y="449"/><use href="#g55" x="9" y="458"/><use href="#g55" x="15" y="458"/><use href="#g69" x="21" y="458"/><use href="#g70" x="27" y="458"/><use href="#g67" x="33" y="458"/><use href="#g48" x="39" y="458"/><use href="#g48" x="45" y="458"/><use href="#g48" x="51" y="458"/><use href="#g48" x="63" y="458"/><use href="#g48" x="69" y="458"/><use href="#g48" x="75" y="458"/><use href="#g48" x="81" y="458"/><use href="#g49" x="87" y="458"/><use href="#g48" x="93" y="458"/><use href="#g48" x="99" y="458"/><use href="#g48" x="105" y="458"/><use href="#g114" x="117" y="458"/><use href="#g112" x="123" y="458"/><use href="#g99" x="129" y="458"/><use href="#g114" x="135" y="458"/><use href="#g116" x="141" y="458"/><use href="#g52" x="147" y="458"/><use href="#g46" x="176" y="458"/><use href="#g100" x="182" y="458"/><use href="#g97" x="188" y="458"/><use href="#g116" x="194" y="458"/><use href="#g97" x="200" y="458"/><use href="#g73" x="393" y="458"/><use href="#g109" x="399" y="458"/><use href="#g97" x="405" y="458"/><use href="#g103" x="411" y="458"/><use href="#g48" x="423" y="458"/><use href="#g49" x="429" y="458"/><use href="#g48" x="435" y="458"/><use href="#g48" x="441" y="458"/><use href="#g49" x="447" y="458"/><use href="#g48" x="453" y="458"/><use href="#g48" x="459" y="458"/><use href="#g50" x="465" y="458"/><use href="#g82" x="496" y="458"/><use href="#g82" x="580" y="458"/><use href="#g87" x="586" y="458"/><use href="#g69" x="592" y="458"/><use href="#g55" x="9" y="467"/><use href="#g55" x="15" y="467"/><use href="#g69" x="21" y="467"/><use href="#g70" x="27" y="467"/><use href="#g68" x="33" y="467"/><use href="#g48" x="39" y="467"/><use href="#g48" x="45" y="467"/><use href="#g48" x="51" y="467"/><use href="#g48" x="63" y="467"/><use href="#g48" x="69" y="467"/><use href="#g48" x="75" y="467"/><use href="#g48" x="81" y="467"/><use href="#g49" x="87" y="467"/><use href="#g48" x="93" y="467"/><use href="#g48" x="99" y="467"/><use href="#g48" x="105" y="467"/><use href="#g114" x="117" y="467"/><use href="#g112" x="123" y="467"/><use href="#g99" x="129" y="467"/><use href="#g114" x="135" y="467"/><use href="#g116" x="141" y="467"/><use href="#g52" x="147" y="467"/><use href="#g46" x="176" y="467"/><use href="#g114" x="182" y="467"/><use href="#g115" x="188" y="467"/><use href="#g114" x="194" y="467"/><use href="#g99" x="200" y="467"/><use href="#g114" x="230" y="467"/><use href="#g101" x="236" y="467"/><use href="#g115" x="242" y="467"/><use href="#g111" x="248" y="467"/><use href="#g117" x="254" y="467"/><use href="#g114" x="260" y="467"/><use href="#g99" x="266" y="467"/><use href="#g101" x="272" y="467"/><use href="#g115" x="278" y="467"/><use href="#g73" x="393" y="467"/><use href="#g109" x="399" y="467"/><use href="#g97" x="405" y="467"/><use href="#g103" x="411" y="467"/><use href="#g48" x="423" y="467"/><use href="#g49" x="429" y="467"/><use href="#g48" x="435" y="467"/><use href="#g48" x="441" y="467"/><use href="#g49" x="447" y="467"/><use href="#g48" x="453" y="467"/><use href="#g48" x="459" y="467"/><use href="#g50" x="465" y="467"/><use href="#g82" x="496" y="467"/><use href="#g82" x="580" y="467"/><use href="#g87" x="586" y="467"/><use href="#g69" x="592" y="467"/><use href="#g55" x="9" y="476"/><use href="#g55" x="15" y="476"/><use href="#g69" x="21" y="476"/><use href="#g70" x="27" y="476"/><use href="#g69" x="33" y="476"/><use href="#g48" x="39" y="476"/><use href="#g48" x="45" y="476"/><use href="#g48" x="51" y="476"/><use href="#g48" x="63" y="476"/><use href="#g48" x="69" y="476"/><use href="#g48" x="75" y="476"/><use href="#g48" x="81" y="476"/><use href="#g53" x="87" y="476"/><use href="#g48" x="93" y="476"/><use href="#g48" x="99" y="476"/><use href="#g48" x="105" y="476"/><use href="#g114" x="117" y="476"/><use href="#g112" x="123" y="476"/><use href="#g99" x="129" y="476"/><use href="#g114" x="135" y="476"/><use href="#g116" x="141" y="476"/><use href="#g52" x="147" y="476"/><use href="#g46" x="176" y="476"/><use href="#g114" x="182" y="476"/><use href="#g101" x="188" y="476"/><use href="#g108" x="194" y="476"/><use href="#g111" x="200" y="476"/><use href="#g99" x="206" y="476"/><use href="#g73" x="393" y="476"/><use href="#g109" x="399" y="476"/><use href="#g97" x="405" y="476"/><use href="#g103" x="411" y="476"/><use href="#g48" x="423" y="476"/><use href="#g49" x="429" y="476"/><use href="#g48" x="435" y="476"/><use href="#g48" x="441" y="476"/><use href="#g49" x="447" y="476"/><use href="#g48" x="453" y="476"/><use href="#g48" x="459" y="476"/><use href="#g50" x="465" y="476"/><use href="#g82" x="496" y="476"/><use href="#g82" x="580" y="476"/><use href="#g87" x="586" y="476"/><use href="#g69" x="592" y="476"/><use href="#g55" x="9" y="485"/><use href="#g55" x="15" y="485"/><use href="#g70" x="21" y="485"/><use href="#g49" x="27" y="485"/><use href="#g48" x="33" y="485"/><use href="#g48" x="39" y="485"/><use href="#g48" x="45" y="485"/><use href="#g48" x="51" y="485"/><use href="#g48" x="63" y="485"/><use href="#g48" x="69" y="485"/><use href="#g48" x="75" y="485"/><use href="#g48" x="81" y="485"/><use href="#g49" x="87" y="485"/><use href="#g48" x="93" y="485"/><use href="#g48" x="99" y="485"/><use href="#g48" x="105" y="485"/><use href="#g103" x="117" y="485"/><use href="#g100" x="123" y="485"/><use href="#g105" x="129" y="485"/><use href="#g51" x="135" y="485"/><use href="#g50" x="141" y="485"/><use href="#g80" x="230" y="485"/><use href="#g69" x="236" y="485"/><use href="#g104" x="248" y="485"/><use href="#g101" x="254" y="485"/><use href="#g97" x="260" y="485"/><use href="#g100" x="266" y="485"/><use href="#g101" x="272" y="485"/><use href="#g114" x="278" y="485"/><use href="#g73" x="393" y="485"/><use href="#g109" x="399" y="485"/><use href="#g97" x="405" y="485"/><use href="#g103" x="411" y="485"/><use href="#g48" x="423" y="485"/><use href="#g49" x="429" y="485"/><use href="#g48" x="435" y="485"/><use href="#g48" x="441" y="485"/><use href="#g49" x="447" y="485"/><use href="#g48" x="453" y="485"/><use href="#g48" x="459" y="485"/><use href="#g50" x="465" y="485"/><use href="#g82" x="496" y="485"/><use href="#g82" x="580" y="485"/><use href="#g87" x="586" y="485"/><use href="#g69" x="592" y="485"/><use href="#g55" x="9" y="494"/><use href="#g55" x="15" y="494"/><use href="#g70" x="21" y="494"/><use href="#g49" x="27" y="494"/><use href="#g49" x="33" y="494"/><use href="#g48" x="39" y="494"/><use href="#g48" x="45" y="494"/><use href="#g48" x="51" y="494"/><use href="#g48" x="63" y="494"/><use href="#g48" x="69" y="494"/><use href="#g48" x="75" y="494"/><use href="#g52" x="81" y="494"/><use href="#g51" x="87" y="494"/><use href="#g48" x="93" y="494"/><use href="#g48" x="99" y="494"/><use href="#g48" x="105" y="494"/><use href="#g103" x="117" y="494"/><use href="#g100" x="123" y="494"/><use href="#g105" x="129" y="494"/><use href="#g51" x="135" y="494"/><use href="#g50" x="141" y="494"/><use href="#g46" x="176" y="494"/><use href="#g116" x="182" y="494"/><use href="#g101" x="188" y="494"/><use href="#g120" x="194" y="494"/><use href="#g116" x="200" y="494"/><use href="#g83" x="230" y="494"/><use href="#g70" x="236" y="494"/><use href="#g88" x="242" y="494"/><use href="#g44" x="248" y="494"/><use href="#g99" x="254" y="494"/><use href="#g111" x="260" y="494"/><use href="#g100" x="266" y="494"/><use href="#g101" x="272" y="494"/><use href="#g44" x="278" y="494"/><use href="#g105" x="284" y="494"/><use href="#g109" x="290" y="494"/><use href="#g112" x="296" y="494"/><use href="#g111" x="302" y="494"/><use href="#g114" x="308" y="494"/><use href="#g116" x="314" y="494"/><use href="#g115" x="320" y="494"/><use href="#g44" x="326" y="494"/><use href="#g101" x="332" y="494"/><use href="#g120" x="338" y="494"/><use href="#g112" x="344" y="494"/><use href="#g111" x="350" y="494"/><use href="#g114" x="356" y="494"/><use href="#g116" x="362" y="494"/><use href="#g115" x="368" y="494"/><use href="#g73" x="393" y="494"/><use href="#g109" x="399" y="494"/><use href="#g97" x="405" y="494"/><use href="#g103" x="411" y="494"/><use href="#g48" x="423" y="494"/><use href="#g49" x="429" y="494"/><use href="#g48" x="435" y="494"/><use href="#g48" x="441" y="494"/><use href="#g49" x="447" y="494"/><use href="#g48" x="453" y="494"/><use href="#g48" x="459" y="494"/><use href="#g50" x="465" y="494"/><use href="#g82" x="496" y="494"/><use href="#g82" x="580" y="494"/><use href="#g87" x="586" y="494"/><use href="#g69" x="592" y="494"/><use href="#g55" x="9" y="503"/><use href="#g55" x="15" y="503"/><use href="#g70" x="21" y="503"/><use href="#g53" x="27" y="503"/><use href="#g52" x="33" y="503"/><use href="#g48" x="39" y="503"/><use href="#g48" x="45" y="503"/><use href="#g48" x="51" y="503"/><use href="#g48" x="63" y="503"/><use href="#g48" x="69" y="503"/><use href="#g48" x="75" y="503"/><use href="#g48" x="81" y="503"/><use href="#g50" x="87" y="503"/><use href="#g48" x="93" y="503"/><use href="#g48" x="99" y="503"/><use href="#g48" x="105" y="503"/><use href="#g103" x="117" y="503"/><use href="#g100" x="123" y="503"/><use href="#g105" x="129" y="503"/><use href="#g51" x="135" y="503"/><use href="#g50" x="141" y="503"/><use href="#g46" x="176" y="503"/><use href="#g100" x="182" y="503"/><use href="#g97" x="188" y="503"/><use href="#g116" x="194" y="503"/><use href="#g97" x="200" y="503"/><use href="#g73" x="393" y="503"/><use href="#g109" x="399" y="503"/><use href="#g97" x="405" y="503"/><use href="#g103" x="411" y="503"/><use href="#g48" x="423" y="503"/><use href="#g49" x="429" y="503"/><use href="#g48" x="435" y="503"/><use href="#g48" x="441" y="503"/><use href="#g49" x="447" y="503"/><use href="#g48" x="453" y="503"/><use href="#g48" x="459" y="503"/><use href="#g50" x="465" y="503"/><use href="#g82" x="496" y="503"/><use href="#g82" x="580" y="503"/><use href="#g87" x="586" y="503"/><use href="#g69" x="592" y="503"/><use href="#g55" x="9" y="512"/><use href="#g55" x="15" y="512"/><use href="#g70" x="21" y="512"/><use href="#g53" x="27" y="512"/><use href="#g54" x="33" y="512"/><use href="#g48" x="39" y="512"/><use href="#g48" x="45" y="512"/><use href="#g48" x="51" y="512"/><use href="#g48" x="63" y="512"/><use href="#g48" x="69" y="512"/><use href="#g48" x="75" y="512"/><use href="#g48" x="81" y="512"/><use href="#g49" x="87" y="512"/><use href="#g48" x="93" y="512"/><use href="#g48" x="99" y="512"/><use href="#g48" x="105" y="512"/><use href="#g103" x="117" y="512"/><use href="#g100" x="123" y="512"/><use href="#g105" x="129" y="512"/><use href="#g51" x="135" y="512"/><use href="#g50" x="141" y="512"/><use href="#g46" x="176" y="512"/><use href="#g114" x="182" y="512"/><use href="#g115" x="188" y="512"/><use href="#g114" x="194" y="512"/><use href="#g99" x="200" y="512"/><use href="#g114" x="230" y="512"/><use href="#g101" x="236" y="512"/><use href="#g115" x="242" y="512"/><use href="#g111" x="248" y="512"/><use href="#g117" x="254" y="512"/><use href="#g114" x="260" y="512"/><use href="#g99" x="266" y="512"/><use href="#g101" x="272" y="512"/><use href="#g115" x="278" y="512"/><use href="#g73" x="393" y="512"/><use href="#g109" x="399" y="512"/><use href="#g97" x="405" y="512"/><use href="#g103" x="411" y="512"/><use href="#g48" x="423" y="512"/><use href="#g49" x="429" y="512"/><use href="#g48" x="435" y="512"/><use href="#g48" x="441" y="512"/><use href="#g49" x="447" y="512"/><use href="#g48" x="453" y="512"/><use href="#g48" x="459" y="512"/><use href="#g50" x="465" y="512"/><use href="#g82" x="496" y="512"/><use href="#g82" x="580" y="512"/><use href="#g87" x="586" y="512"/><use href="#g69" x="592" y="512"/><use href="#g55" x="9" y="521"/><use href="#g55" x="15" y="521"/><use href="#g70" x="21" y="521"/><use href="#g53" x="27" y="521"/><use href="#g55" x="33" y="521"/><use href="#g48" x="39" y="521"/><use href="#g48" x="45" y="521"/><use href="#g48" x="51" y="521"/><use href="#g48" x="63" y="521"/><use href="#g48" x="69" y="521"/><use href="#g48" x="75" y="521"/><use href="#g48" x="81" y="521"/><use href="#g50" x="87" y="521"/><use href="#g48" x="93" y="521"/><use href="#g48" x="99" y="521"/><use href="#g48" x="105" y="521"/><use href="#g103" x="117" y="521"/><use href="#g100" x="123" y="521"/><use href="#g105" x="129" y="521"/><use href="#g51" x="135" y="521"/><use href="#g50" x="141" y="521"/><use href="#g46" x="176" y="521"/><use href="#g114" x="182" y="521"/><use href="#g101" x="188" y="521"/><use href="#g108" x="194" y="521"/><use href="#g111" x="200" y="521"/><use href="#g99" x="206" y="521"/><use href="#g73" x="393" y="521"/><use href="#g109" x="399" y="521"/><use href="#g97" x="405" y="521"/><use href="#g103" x="411" y="521"/><use href="#g48" x="423" y="521"/><use href="#g49" x="429" y="521"/><use href="#g48" x="435" y="521"/><use href="#g48" x="441" y="521"/><use href="#g49" x="447" y="521"/><use href="#g48" x="453" y="521"/><use href="#g48" x="459" y="521"/><use href="#g50" x="465" y="521"/><use href="#g82" x="496" y="521"/><use href="#g82" x="580" y="521"/><use href="#g87" x="586" y="521"/><use href="#g69" x="592" y="521"/><use href="#g55" x="9" y="530"/><use href="#g55" x="15" y="530"/><use href="#g70" x="21" y="530"/><use href="#g69" x="27" y="530"/><use href="#g48" x="33" y="530"/><use href="#g48" x="39" y="530"/><use href="#g48" x="45" y="530"/><use href="#g48" x="51" y="530"/><use href="#g48" x="63" y="530"/><use href="#g48" x="69" y="530"/><use href="#g48" x="75" y="530"/><use href="#g48" x="81" y="530"/><use href="#g49" x="87" y="530"/><use href="#g48" x="93" y="530"/><use href="#g48" x="99" y="530"/><use href="#g48" x="105" y="530"/><use href="#g115" x="117" y="530"/><use href="#g101" x="123" y="530"/><use href="#g99" x="129" y="530"/><use href="#g117" x="135" y="530"/><use href="#g114" x="141" y="530"/><use href="#g51" x="147" y="530"/><use href="#g50" x="153" y="530"/><use href="#g80" x="230" y="530"/><use href="#g69" x="236" y="530"/><use href="#g104" x="248" y="530"/><use href="#g101" x="254" y="530"/><use href="#g97" x="260" y="530"/><use href="#g100" x="266" y="530"/><use href="#g101" x="272" y="530"/><use href="#g114" x="278" y="530"/><use href="#g73" x="393" y="530"/><use href="#g109" x="399" y="530"/><use href="#g97" x="405" y="530"/><use href="#g103" x="411" y="530"/><use href="#g48" x="423" y="530"/><use href="#g49" x="429" y="530"/><use href="#g48" x="435" y="530"/><use href="#g48" x="441" y="530"/><use href="#g49" x="447" y="530"/><use href="#g48" x="453" y="530"/><use href="#g48" x="459" y="530"/><use href="#g50" x="465" y="530"/><use href="#g82" x="496" y="530"/><use href="#g82" x="580" y="530"/><use href="#g87" x="586" y="530"/><use href="#g69" x="592" y="530"/><use href="#g55" x="9" y="539"/><use href="#g55" x="15" y="539"/><use href="#g70" x="21" y="539"/><use href="#g69" x="27" y="539"/><use href="#g49" x="33" y="539"/><use href="#g48" x="39" y="539"/><use href="#g48" x="45" y="539"/><use href="#g48" x="51" y="539"/><use href="#g48" x="63" y="539"/><use href="#g48" x="69" y="539"/><use href="#g48" x="75" y="539"/><use href="#g48" x="81" y="539"/><use href="#g68" x="87" y="539"/><use href="#g48" x="93" y="539"/><use href="#g48" x="99" y="539"/><use href="#g48" x="105" y="539"/><use href="#g115" x="117" y="539"/><use href="#g101" x="123" y="539"/><use href="#g99" x="129" y="539"/><use href="#g117" x="135" y="539"/><use href="#g114" x="141" y="539"/><use href="#g51" x="147" y="539"/><use href="#g50" x="153" y="539"/><use href="#g46" x="176" y="539"/><use href="#g116" x="182" y="539"/><use href="#g101" x="188" y="539"/><use href="#g120" x="194" y="539"/><use href="#g116" x="200" y="539"/><use href="#g83" x="230" y="539"/><use href="#g70" x="236" y="539"/><use href="#g88" x="242" y="539"/><use href="#g44" x="248" y="539"/><use href="#g99" x="254" y="539"/><use href="#g111" x="260" y="539"/><use href="#g100" x="266" y="539"/><use href="#g101" x="272" y="539"/><use href="#g44" x="278" y="539"/><use href="#g105" x="284" y="539"/><use href="#g109" x="290" y="539"/><use href="#g112" x="296" y="539"/><use href="#g111" x="302" y="539"/><use href="#g114" x="308" y="539"/><use href="#g116" x="314" y="539"/><use href="#g115" x="320" y="539"/><use href="#g44" x="326" y="539"/><use href="#g101" x="332" y="539"/><use href="#g120" x="338" y="539"/><use href="#g112" x="344" y="539"/><use href="#g111" x="350" y="539"/><use href="#g114" x="356" y="539"/><use href="#g116" x="362" y="539"/><use href="#g115" x="368" y="539"/><use href="#g73" x="393" y="539"/><use href="#g109" x="399" y="539"/><use href="#g97" x="405" y="539"/><use href="#g103" x="411" y="539"/><use href="#g48" x="423" y="539"/><use href="#g49" x="429" y="539"/><use href="#g48" x="435" y="539"/><use href="#g48" x="441" y="539"/><use href="#g49" x="447" y="539"/><use href="#g48" x="453" y="539"/><use href="#g48" x="459" y="539"/><use href="#g50" x="465" y="539"/><use href="#g82" x="496" y="539"/><use href="#g82" x="580" y="539"/><use href="#g87" x="586" y="539"/><use href="#g69" x="592" y="539"/><use href="#g55" x="9" y="548"/><use href="#g55" x="15" y="548"/><use href="#g70" x="21" y="548"/><use href="#g69" x="27" y="548"/><use href="#g69" x="33" y="548"/><use href="#g48" x="39" y="548"/><use href="#g48" x="45" y="548"/><use href="#g48" x="51" y="548"/><use href="#g48" x="63" y="548"/><use href="#g48" x="69" y="548"/><use href="#g48" x="75" y="548"/><use href="#g48" x="81" y="548"/><use href="#g49" x="87" y="548"/><use href="#g48" x="93" y="548"/><use href="#g48" x="99" y="548"/><use href="#g48" x="105" y="548"/><use href="#g115" x="117" y="548"/><use href="#g101" x="123" y="548"/><use href="#g99" x="129" y="548"/><use href="#g117" x="135" y="548"/><use href="#g114" x="141" y="548"/><use href="#g51" x="147" y="548"/><use href="#g50" x="153" y="548"/><use href="#g46" x="176" y="548"/><use href="#g100" x="182" y="548"/><use href="#g97" x="188" y="548"/><use href="#g116" x="194" y="548"/><use href="#g97" x="200" y="548"/><use href="#g73" x="393" y="548"/><use href="#g109" x="399" y="548"/><use href="#g97" x="405" y="548"/><use href="#g103" x="411" y="548"/><use href="#g48" x="423" y="548"/><use href="#g49" x="429" y="548"/><use href="#g48" x="435" y="548"/><use href="#g48" x="441" y="548"/><use href="#g49" x="447" y="548"/><use href="#g48" x="453" y="548"/><use href="#g48" x="459" y="548"/><use href="#g50" x="465" y="548"/><use href="#g82" x="496" y="548"/><use href="#g82" x="580" y="548"/><use href="#g87" x="586" y="548"/><use href="#g69" x="592" y="548"/><use href="#g55" x="9" y="557"/><use href="#g55" x="15" y="557"/><use href="#g70" x="21" y="557"/><use href="#g69" x="27" y="557"/><use href="#g70" x="33" y="557"/><use href="#g48" x="39" y="557"/><use href="#g48" x="45" y="557"/><use href="#g48" x="51" y="557"/><use href="#g48" x="63" y="557"/><use href="#g48" x="69" y="557"/><use href="#g48" x="75" y="557"/><use href="#g48" x="81" y="557"/><use href="#g49" x="87" y="557"/><use href="#g48" x="93" y="557"/><use href="#g48" x="99" y="557"/><use href="#g48" x="105" y="557"/><use href="#g115" x="117" y="557"/><use href="#g101" x="123" y="557"/><use href="#g99" x="129" y="557"/><use href="#g117" x="135" y="557"/><use href="#g114" x="141" y="557"/><use href="#g51" x="147" y="557"/><use href="#g50" x="153" y="557"/><use href="#g46" x="176" y="557"/><use href="#g114" x="182" y="557"/><use href="#g115" x="188" y="557"/><use href="#g114" x="194" y="557"/><use href="#g99" x="200" y="557"/><use href="#g114" x="230" y="557"/><use href="#g101" x="236" y="557"/><use href="#g115" x="242" y="557"/><use href="#g111" x="248" y="557"/><use href="#g117" x="254" y="557"/><use href="#g114" x="260" y="557"/><use href="#g99" x="266" y="557"/><use href="#g101" x="272" y="557"/><use href="#g115" x="278" y="557"/><use href="#g73" x="393" y="557"/><use href="#g109" x="399" y="557"/><use href="#g97" x="405" y="557"/><use href="#g103" x="411" y="557"/><use href="#g48" x="423" y="557"/><use href="#g49" x="429" y="557"/><use href="#g48" x="435" y="557"/><use href="#g48" x="441" y="557"/><use href="#g49" x="447" y="557"/><use href="#g48" x="453" y="557"/><use href="#g48" x="459" y="557"/><use href="#g50" x="465" y="557"/><use href="#g82" x="496" y="557"/><use href="#g82" x="580" y="557"/><use href="#g87" x="586" y="557"/><use href="#g69" x="592" y="557"/><use href="#g55" x="9" y="566"/><use href="#g55" x="15" y="566"/><use href="#g70" x="21" y="566"/><use href="#g70" x="27" y="566"/><use href="#g48" x="33" y="566"/><use href="#g48" x="39" y="566"/><use href="#g48" x="45" y="566"/><use href="#g48" x="51" y="566"/><use href="#g48" x="63" y="566"/><use href="#g48" x="69" y="566"/><use href="#g48" x="75" y="566"/><use href="#g48" x="81" y="566"/><use href="#g49" x="87" y="566"/><use href="#g48" x="93" y="566"/><use href="#g48" x="99" y="566"/><use href="#g48" x="105" y="566"/><use href="#g115" x="117" y="566"/><use href="#g101" x="123" y="566"/><use href="#g99" x="129" y="566"/><use href="#g117" x="135" y="566"/><use href="#g114" x="141" y="566"/><use href="#g51" x="147" y="566"/><use href="#g50" x="153" y="566"/><use href="#g46" x="176" y="566"/><use href="#g114" x="182" y="566"/><use href="#g101" x="188" y="566"/><use href="#g108" x="194" y="566"/><use href="#g111" x="200" y="566"/><use href="#g99" x="206" y="566"/><use href="#g73" x="393" y="566"/><use href="#g109" x="399" y="566"/><use href="#g97" x="405" y="566"/><use href="#g103" x="411" y="566"/><use href="#g48" x="423" y="566"/><use href="#g49" x="429" y="566"/><use href="#g48" x="435" y="566"/><use href="#g48" x="441" y="566"/><use href="#g49" x="447" y="566"/><use href="#g48" x="453" y="566"/><use href="#g48" x="459" y="566"/><use href="#g50" x="465" y="566"/><use href="#g82" x="496" y="566"/><use href="#g82" x="580" y="566"/><use href="#g87" x="586" y="566"/><use href="#g69" x="592" y="566"/><use href="#g55" x="9" y="575"/><use href="#g67" x="15" y="575"/><use href="#g56" x="21" y="575"/><use href="#g48" x="27" y="575"/><use href="#g48" x="33" y="575"/><use href="#g48" x="39" y="575"/><use href="#g48" x="45" y="575"/><use href="#g48" x="51" y="575"/><use href="#g48" x="63" y="575"/><use href="#g48" x="69" y="575"/><use href="#g48" x="75" y="575"/><use href="#g48" x="81" y="575"/><use href="#g49" x="87" y="575"/><use href="#g48" x="93" y="575"/><use href="#g48" x="99" y="575"/><use href="#g48" x="105" y="575"/><use href="#g107" x="117" y="575"/><use href="#g101" x="123" y="575"/><use href="#g114" x="129" y="575"/><use href="#g110" x="135" y="575"/><use href="#g101" x="141" y="575"/><use href="#g108" x="147" y="575"/><use href="#g51" x="153" y="575"/><use href="#g50" x="159" y="575"/><use href="#g80" x="230" y="575"/><use href="#g69" x="236" y="575"/><use href="#g104" x="248" y="575"/><use href="#g101" x="254" y="575"/><use href="#g97" x="260" y="575"/><use href="#g100" x="266" y="575"/><use href="#g101" x="272" y="575"/><use href="#g114" x="278" y="575"/><use href="#g73" x="393" y="575"/><use href="#g109" x="399" y="575"/><use href="#g97" x="405" y="575"/><use href="#g103" x="411" y="575"/><use href="#g48" x="423" y="575"/><use href="#g49" x="429" y="575"/><use href="#g48" x="435" y="575"/><use href="#g48" x="441" y="575"/><use href="#g49" x="447" y="575"/><use href="#g48" x="453" y="575"/><use href="#g48" x="459" y="575"/><use href="#g50" x="465" y="575"/><use href="#g82" x="496" y="575"/><use href="#g82" x="580" y="575"/><use href="#g87" x="586" y="575"/><use href="#g69" x="592" y="575"/><use href="#g55" x="9" y="584"/><use href="#g67" x="15" y="584"/><use href="#g56" x="21" y="584"/><use href="#g48" x="27" y="584"/><use href="#g49" x="33" y="584"/><use href="#g48" x="39" y="584"/><use href="#g48" x="45" y="584"/><use href="#g48" x="51" y="584"/><use href="#g48" x="63" y="584"/><use href="#g48" x="69" y="584"/><use href="#g48" x="75" y="584"/><use href="#g56" x="81" y="584"/><use href="#g52" x="87" y="584"/><use href="#g48" x="93" y="584"/><use href="#g48" x="99" y="584"/><use href="#g48" x="105" y="584"/><use href="#g107" x="117" y="584"/><use href="#g101" x="123" y="584"/><use href="#g114" x="129" y="584"/><use href="#g110" x="135" y="584"/><use href="#g101" x="141" y="584"/><use href="#g108" x="147" y="584"/><use href="#g51" x="153" y="584"/><use href="#g50" x="159" y="584"/><use href="#g46" x="176" y="584"/><use href="#g116" x="182" y="584"/><use href="#g101" x="188" y="584"/><use href="#g120" x="194" y="584"/><use href="#g116" x="200" y="584"/><use href="#g83" x="230" y="584"/><use href="#g70" x="236" y="584"/><use href="#g88" x="242" y="584"/><use href="#g44" x="248" y="584"/><use href="#g99" x="254" y="584"/><use href="#g111" x="260" y="584"/><use href="#g100" x="266" y="584"/><use href="#g101" x="272" y="584"/><use href="#g44" x="278" y="584"/><use href="#g105" x="284" y="584"/><use href="#g109" x="290" y="584"/><use href="#g112" x="296" y="584"/><use href="#g111" x="302" y="584"/><use href="#g114" x="308" y="584"/><use href="#g116" x="314" y="584"/><use href="#g115" x="320" y="584"/><use href="#g44" x="326" y="584"/><use href="#g101" x="332" y="584"/><use href="#g120" x="338" y="584"/><use href="#g112" x="344" y="584"/><use href="#g111" x="350" y="584"/><use href="#g114" x="356" y="584"/><use href="#g116" x="362" y="584"/><use href="#g115" x="368" y="584"/><use href="#g73" x="393" y="584"/><use href="#g109" x="399" y="584"/><use href="#g97" x="405" y="584"/><use href="#g103" x="411" y="584"/><use href="#g48" x="423" y="584"/><use href="#g49" x="429" y="584"/><use href="#g48" x="435" y="584"/><use href="#g48" x="441" y="584"/><use href="#g49" x="447" y="584"/><use href="#g48" x="453" y="584"/><use href="#g48" x="459" y="584"/><use href="#g50" x="465" y="584"/><use href="#g82" x="496" y="584"/><use href="#g82" x="580" y="584"/><use href="#g87" x="586" y="584"/><use href="#g69" x="592" y="584"/><use href="#g55" x="9" y="593"/><use href="#g67" x="15" y="593"/><use href="#g56" x="21" y="593"/><use href="#g56" x="27" y="593"/><use href="#g53" x="33" y="593"/><use href="#g48" x="39" y="593"/><use href="#g48" x="45" y="593"/><use href="#g48" x="51" y="593"/><use href="#g48" x="63" y="593"/><use href="#g48" x="69" y="593"/><use href="#g48" x="75" y="593"/><use href="#g48" x="81" y="593"/><use href="#g53" x="87" y="593"/><use href="#g48" x="93" y="593"/><use href="#g48" x="99" y="593"/><use href="#g48" x="105" y="593"/><use href="#g107" x="117" y="593"/><use href="#g101" x="123" y="593"/><use href="#g114" x="129" y="593"/><use href="#g110" x="135" y="593"/><use href="#g101" x="141" y="593"/><use href="#g108" x="147" y="593"/><use href="#g51" x="153" y="593"/><use href="#g50" x="159" y="593"/><use href="#g46" x="176" y="593"/><use href="#g100" x="182" y="593"/><use href="#g97" x="188" y="593"/><use href="#g116" x="194" y="593"/><use href="#g97" x="200" y="593"/><use href="#g73" x="393" y="593"/><use href="#g109" x="399" y="593"/><use href="#g97" x="405" y="593"/><use href="#g103" x="411" y="593"/><use href="#g48" x="423" y="593"/><use href="#g49" x="429" y="593"/><use href="#g48" x="435" y="593"/><use href="#g48" x="441" y="593"/><use href="#g49" x="447" y="593"/><use href="#g48" x="453" y="593"/><use href="#g48" x="459" y="593"/><use href="#g50" x="465" y="593"/><use href="#g82" x="496" y="593"/><use href="#g82" x="580" y="593"/><use href="#g87" x="586" y="593"/><use href="#g69" x="592" y="593"/></g><g clip-path="url(#cb)" fill="#f00"><use href="#g48" x="9" y="269"/><use href="#g48" x="15" y="269"/><use href="#g56" x="21" y="269"/><use href="#g54" x="27" y="269"/><use href="#g48" x="33" y="269"/><use href="#g48" x="39" y="269"/><use href="#g48" x="45" y="269"/><use href="#g48" x="51" y="269"/><use href="#g48" x="63" y="269"/><use href="#g48" x="69" y="269"/><use href="#g48" x="75" y="269"/><use href="#g48" x="81" y="269"/><use href="#g49" x="87" y="269"/><use href="#g48" x="93" y="269"/><use href="#g48" x="99" y="269"/><use href="#g48" x="105" y="269"/><use href="#g80" x="393" y="269"/><use href="#g114" x="399" y="269"/><use href="#g105" x="405" y="269"/><use href="#g118" x="411" y="269"/><use href="#g48" x="423" y="269"/><use href="#g48" x="429" y="269"/><use href="#g48" x="435" y="269"/><use href="#g50" x="441" y="269"/><use href="#g49" x="447" y="269"/><use href="#g48" x="453" y="269"/><use href="#g52" x="459" y="269"/><use href="#g48" x="465" y="269"/><use href="#g82" x="496" y="269"/><use href="#g87" x="502" y="269"/><use href="#g69" x="508" y="269"/><use href="#g82" x="580" y="269"/><use href="#g87" x="586" y="269"/><use href="#g69" x="592" y="269"/><use href="#g48" x="9" y="287"/><use href="#g48" x="15" y="287"/><use href="#g57" x="21" y="287"/><use href="#g69" x="27" y="287"/><use href="#g70" x="33" y="287"/><use href="#g48" x="39" y="287"/><use href="#g48" x="45" y="287"/><use href="#g48" x="51" y="287"/><use href="#g48" x="63" y="287"/><use href="#g48" x="69" y="287"/><use href="#g48" x="75" y="287"/><use href="#g50" x="81" y="287"/><use href="#g49" x="87" y="287"/><use href="#g48" x="93" y="287"/><use href="#g48" x="99" y="287"/><use href="#g48" x="105" y="287"/><use href="#g80" x="393" y="287"/><use href="#g114" x="399" y="287"/><use href="#g105" x="405" y="287"/><use href="#g118" x="411" y="287"/><use href="#g48" x="423" y="287"/><use href="#g48" x="429" y="287"/><use href="#g48" x="435" y="287"/><use href="#g50" x="441" y="287"/><use href="#g49" x="447" y="287"/><use href="#g49" x="453" y="287"/><use href="#g48" x="459" y="287"/><use href="#g52" x="465" y="287"/><use href="#g82" x="496" y="287"/><use href="#g87" x="502" y="287"/><use href="#g71" x="520" y="287"/><use href="#g117" x="526" y="287"/><use href="#g97" x="532" y="287"/><use href="#g114" x="538" y="287"/><use href="#g100" x="544" y="287"/><use href="#g101" x="550" y="287"/><use href="#g100" x="556" y="287"/><use href="#g82" x="580" y="287"/><use href="#g87" x="586" y="287"/></g></svg><div style="left:669px;top:30px;width:17px;height:568px;background:linear-gradient(90deg,#f3f1ec 0 1px,#eeede5 1px,#f6f5f1 50%,#fefefb 85%,#fcfbf3);"></div><div style="left:669px;top:30px;width:17px;height:17px;background:#fff;"></div><div style="left:671px;top:31px;width:13px;height:14px;background:linear-gradient(135deg,#dae4fd,#c3d3fb 50%,#b4c8f8);border-radius:2px;box-shadow:inset 0 0 0 1px rgba(170,195,245,.6)"></div><div style="left:671px;top:46px;width:13px;height:1px;background:#a9bfee;"></div><div style="left:669px;top:30px;width:1px;height:17px;background:#f6f5ee;"></div><div style="left:685px;top:30px;width:1px;height:17px;background:#fcfbf3;"></div><div style="left:677px;top:35px;width:1px;height:1px;background:#4d6185;"></div><div style="left:676px;top:36px;width:1px;height:1px;background:#4d6185;"></div><div style="left:677px;top:36px;width:1px;height:1px;background:#4d6185;"></div><div style="left:678px;top:36px;width:1px;height:1px;background:#4d6185;"></div><div style="left:675px;top:37px;width:1px;height:1px;background:#4d6185;"></div><div style="left:676px;top:37px;width:1px;height:1px;background:#4d6185;"></div><div style="left:677px;top:37px;width:1px;height:1px;background:#4d6185;"></div><div style="left:678px;top:37px;width:1px;height:1px;background:#4d6185;"></div><div style="left:679px;top:37px;width:1px;height:1px;background:#4d6185;"></div><div style="left:674px;top:38px;width:1px;height:1px;background:#4d6185;"></div><div style="left:675px;top:38px;width:1px;height:1px;background:#4d6185;"></div><div style="left:676px;top:38px;width:1px;height:1px;background:#4d6185;"></div><div style="left:678px;top:38px;width:1px;height:1px;background:#4d6185;"></div><div style="left:679px;top:38px;width:1px;height:1px;background:#4d6185;"></div><div style="left:680px;top:38px;width:1px;height:1px;background:#4d6185;"></div><div style="left:673px;top:39px;width:1px;height:1px;background:#4d6185;"></div><div style="left:674px;top:39px;width:1px;height:1px;background:#4d6185;"></div><div style="left:675px;top:39px;width:1px;height:1px;background:#4d6185;"></div><div style="left:679px;top:39px;width:1px;height:1px;background:#4d6185;"></div><div style="left:680px;top:39px;width:1px;height:1px;background:#4d6185;"></div><div style="left:681px;top:39px;width:1px;height:1px;background:#4d6185;"></div><div style="left:674px;top:40px;width:1px;height:1px;background:#4d6185;"></div><div style="left:680px;top:40px;width:1px;height:1px;background:#4d6185;"></div><div style="left:669px;top:47px;width:17px;height:17px;background:#fff;"></div><div style="left:671px;top:48px;width:13px;height:14px;background:linear-gradient(135deg,#dae4fd,#c3d3fb 50%,#b4c8f8);border-radius:2px;box-shadow:inset 0 0 0 1px rgba(170,195,245,.6)"></div><div style="left:671px;top:63px;width:13px;height:1px;background:#a9bfee;"></div><div style="left:669px;top:47px;width:1px;height:17px;background:#f6f5ee;"></div><div style="left:685px;top:47px;width:1px;height:17px;background:#fcfbf3;"></div><div style="left:674px;top:51px;width:6px;height:1px;background:#fff;"></div><div style="left:675px;top:52px;width:6px;height:1px;background:#8eb0f5;"></div><div style="left:674px;top:53px;width:6px;height:1px;background:#fff;"></div><div style="left:675px;top:54px;width:6px;height:1px;background:#8eb0f5;"></div><div style="left:674px;top:55px;width:6px;height:1px;background:#fff;"></div><div style="left:675px;top:56px;width:6px;height:1px;background:#8eb0f5;"></div><div style="left:674px;top:57px;width:6px;height:1px;background:#fff;"></div><div style="left:675px;top:58px;width:6px;height:1px;background:#8eb0f5;"></div><div style="left:669px;top:581px;width:17px;height:17px;background:#fff;"></div><div style="left:671px;top:582px;width:13px;height:14px;background:linear-gradient(135deg,#dae4fd,#c3d3fb 50%,#b4c8f8);border-radius:2px;box-shadow:inset 0 0 0 1px rgba(170,195,245,.6)"></div><div style="left:671px;top:597px;width:13px;height:1px;background:#a9bfee;"></div><div style="left:669px;top:581px;width:1px;height:17px;background:#f6f5ee;"></div><div style="left:685px;top:581px;width:1px;height:17px;background:#fcfbf3;"></div><div style="left:677px;top:592px;width:1px;height:1px;background:#4d6185;"></div><div style="left:676px;top:591px;width:1px;height:1px;background:#4d6185;"></div><div style="left:677px;top:591px;width:1px;height:1px;background:#4d6185;"></div><div style="left:678px;top:591px;width:1px;height:1px;background:#4d6185;"></div><div style="left:675px;top:590px;width:1px;height:1px;background:#4d6185;"></div><div style="left:676px;top:590px;width:1px;height:1px;background:#4d6185;"></div><div style="left:677px;top:590px;width:1px;height:1px;background:#4d6185;"></div><div style="left:678px;top:590px;width:1px;height:1px;background:#4d6185;"></div><div style="left:679px;top:590px;width:1px;height:1px;background:#4d6185;"></div><div style="left:674px;top:589px;width:1px;height:1px;background:#4d6185;"></div><div style="left:675px;top:589px;width:1px;height:1px;background:#4d6185;"></div><div style="left:676px;top:589px;width:1px;height:1px;background:#4d6185;"></div><div style="left:678px;top:589px;width:1px;height:1px;background:#4d6185;"></div><div style="left:679px;top:589px;width:1px;height:1px;background:#4d6185;"></div><div style="left:680px;top:589px;width:1px;height:1px;background:#4d6185;"></div><div style="left:673px;top:588px;width:1px;height:1px;background:#4d6185;"></div><div style="left:674px;top:588px;width:1px;height:1px;background:#4d6185;"></div><div style="left:675px;top:588px;width:1px;height:1px;background:#4d6185;"></div><div style="left:679px;top:588px;width:1px;height:1px;background:#4d6185;"></div><div style="left:680px;top:588px;width:1px;height:1px;background:#4d6185;"></div><div style="left:681px;top:588px;width:1px;height:1px;background:#4d6185;"></div><div style="left:674px;top:587px;width:1px;height:1px;background:#4d6185;"></div><div style="left:680px;top:587px;width:1px;height:1px;background:#4d6185;"></div><div style="left:5px;top:598px;width:664px;height:17px;background:linear-gradient(#eeede5 0 1px,#f3f2ec 1px,#f8f8f4 50%,#fefefb 85%,#fcfbf3);"></div><div style="left:5px;top:598px;width:17px;height:17px;background:#fff;"></div><div style="left:6px;top:600px;width:14px;height:13px;background:linear-gradient(135deg,#dae4fd,#c3d3fb 50%,#b4c8f8);border-radius:2px;box-shadow:inset 0 0 0 1px rgba(170,195,245,.6)"></div><div style="left:21px;top:600px;width:1px;height:13px;background:#bccdf0;"></div><div style="left:5px;top:598px;width:17px;height:1px;background:#eeede5;"></div><div style="left:9px;top:606px;width:1px;height:1px;background:#4d6185;"></div><div style="left:10px;top:605px;width:1px;height:1px;background:#4d6185;"></div><div style="left:10px;top:606px;width:1px;height:1px;background:#4d6185;"></div><div style="left:10px;top:607px;width:1px;height:1px;background:#4d6185;"></div><div style="left:11px;top:604px;width:1px;height:1px;background:#4d6185;"></div><div style="left:11px;top:605px;width:1px;height:1px;background:#4d6185;"></div><div style="left:11px;top:606px;width:1px;height:1px;background:#4d6185;"></div><div style="left:11px;top:607px;width:1px;height:1px;background:#4d6185;"></div><div style="left:11px;top:608px;width:1px;height:1px;background:#4d6185;"></div><div style="left:12px;top:603px;width:1px;height:1px;background:#4d6185;"></div><div style="left:12px;top:604px;width:1px;height:1px;background:#4d6185;"></div><div style="left:12px;top:605px;width:1px;height:1px;background:#4d6185;"></div><div style="left:12px;top:607px;width:1px;height:1px;background:#4d6185;"></div><div style="left:12px;top:608px;width:1px;height:1px;background:#4d6185;"></div><div style="left:12px;top:609px;width:1px;height:1px;background:#4d6185;"></div><div style="left:13px;top:602px;width:1px;height:1px;background:#4d6185;"></div><div style="left:13px;top:603px;width:1px;height:1px;background:#4d6185;"></div><div style="left:13px;top:604px;width:1px;height:1px;background:#4d6185;"></div><div style="left:13px;top:608px;width:1px;height:1px;background:#4d6185;"></div><div style="left:13px;top:609px;width:1px;height:1px;background:#4d6185;"></div><div style="left:13px;top:610px;width:1px;height:1px;background:#4d6185;"></div><div style="left:14px;top:603px;width:1px;height:1px;background:#4d6185;"></div><div style="left:14px;top:609px;width:1px;height:1px;background:#4d6185;"></div><div style="left:22px;top:598px;width:17px;height:17px;background:#fff;"></div><div style="left:23px;top:600px;width:14px;height:13px;background:linear-gradient(135deg,#dae4fd,#c3d3fb 50%,#b4c8f8);border-radius:2px;box-shadow:inset 0 0 0 1px rgba(170,195,245,.6)"></div><div style="left:38px;top:600px;width:1px;height:13px;background:#bccdf0;"></div><div style="left:22px;top:598px;width:17px;height:1px;background:#eeede5;"></div><div style="left:26px;top:603px;width:1px;height:6px;background:#fff;"></div><div style="left:27px;top:604px;width:1px;height:6px;background:#8eb0f5;"></div><div style="left:28px;top:603px;width:1px;height:6px;background:#fff;"></div><div style="left:29px;top:604px;width:1px;height:6px;background:#8eb0f5;"></div><div style="left:30px;top:603px;width:1px;height:6px;background:#fff;"></div><div style="left:31px;top:604px;width:1px;height:6px;background:#8eb0f5;"></div><div style="left:32px;top:603px;width:1px;height:6px;background:#fff;"></div><div style="left:33px;top:604px;width:1px;height:6px;background:#8eb0f5;"></div><div style="left:652px;top:598px;width:17px;height:17px;background:#fff;"></div><div style="left:653px;top:600px;width:14px;height:13px;background:linear-gradient(135deg,#dae4fd,#c3d3fb 50%,#b4c8f8);border-radius:2px;box-shadow:inset 0 0 0 1px rgba(170,195,245,.6)"></div><div style="left:668px;top:600px;width:1px;height:13px;background:#bccdf0;"></div><div style="left:652px;top:598px;width:17px;height:1px;background:#eeede5;"></div><div style="left:663px;top:606px;width:1px;height:1px;background:#4d6185;"></div><div style="left:662px;top:605px;width:1px;height:1px;background:#4d6185;"></div><div style="left:662px;top:606px;width:1px;height:1px;background:#4d6185;"></div><div style="left:662px;top:607px;width:1px;height:1px;background:#4d6185;"></div><div style="left:661px;top:604px;width:1px;height:1px;background:#4d6185;"></div><div style="left:661px;top:605px;width:1px;height:1px;background:#4d6185;"></div><div style="left:661px;top:606px;width:1px;height:1px;background:#4d6185;"></div><div style="left:661px;top:607px;width:1px;height:1px;background:#4d6185;"></div><div style="left:661px;top:608px;width:1px;height:1px;background:#4d6185;"></div><div style="left:660px;top:603px;width:1px;height:1px;background:#4d6185;"></div><div style="left:660px;top:604px;width:1px;height:1px;background:#4d6185;"></div><div style="left:660px;top:605px;width:1px;height:1px;background:#4d6185;"></div><div style="left:660px;top:607px;width:1px;height:1px;background:#4d6185;"></div><div style="left:660px;top:608px;width:1px;height:1px;background:#4d6185;"></div><div style="left:660px;top:609px;width:1px;height:1px;background:#4d6185;"></div><div style="left:659px;top:602px;width:1px;height:1px;background:#4d6185;"></div><div style="left:659px;top:603px;width:1px;height:1px;background:#4d6185;"></div><div style="left:659px;top:604px;width:1px;height:1px;background:#4d6185;"></div><div style="left:659px;top:608px;width:1px;height:1px;background:#4d6185;"></div><div style="left:659px;top:609px;width:1px;height:1px;background:#4d6185;"></div><div style="left:659px;top:610px;width:1px;height:1px;background:#4d6185;"></div><div style="left:658px;top:603px;width:1px;height:1px;background:#4d6185;"></div><div style="left:658px;top:609px;width:1px;height:1px;background:#4d6185;"></div><div style="left:669px;top:598px;width:17px;height:17px;background:#ece9d8;"></div><div style="left:682px;top:603px;width:2px;height:2px;background:#b4b09c;"></div><div style="left:678px;top:607px;width:2px;height:2px;background:#b4b09c;"></div><div style="left:682px;top:607px;width:2px;height:2px;background:#b4b09c;"></div><div style="left:674px;top:611px;width:2px;height:2px;background:#b4b09c;"></div><div style="left:678px;top:611px;width:2px;height:2px;background:#b4b09c;"></div><div style="left:682px;top:611px;width:2px;height:2px;background:#b4b09c;"></div><div style="left:669px;top:598px;width:17px;height:1px;background:#f0eee4;"></div><svg style="left:0;top:0" width="690" height="40"><defs><filter id="cs" x="-50%" y="-50%" width="200%" height="200%"><feGaussianBlur stdDeviation="2.2"/></filter></defs><path d="M435.5 -7 L447.2 5.2 L443.6 5.8 L446.4 10.6 L443.6 12.9 L440.6 9.6 L436.6 11.9 L435.5 11.9 Z" transform="translate(3,3)" filter="url(#cs)" fill="#000" opacity="0.5"/><path d="M435.5 -7 L447.2 5.2 L443.6 5.8 L446.4 10.6 L443.6 12.9 L440.6 9.6 L436.6 11.9 L435.5 11.9 Z" fill="#efefef" stroke="#000" stroke-width="1" stroke-linejoin="miter"/></svg></body></html>
